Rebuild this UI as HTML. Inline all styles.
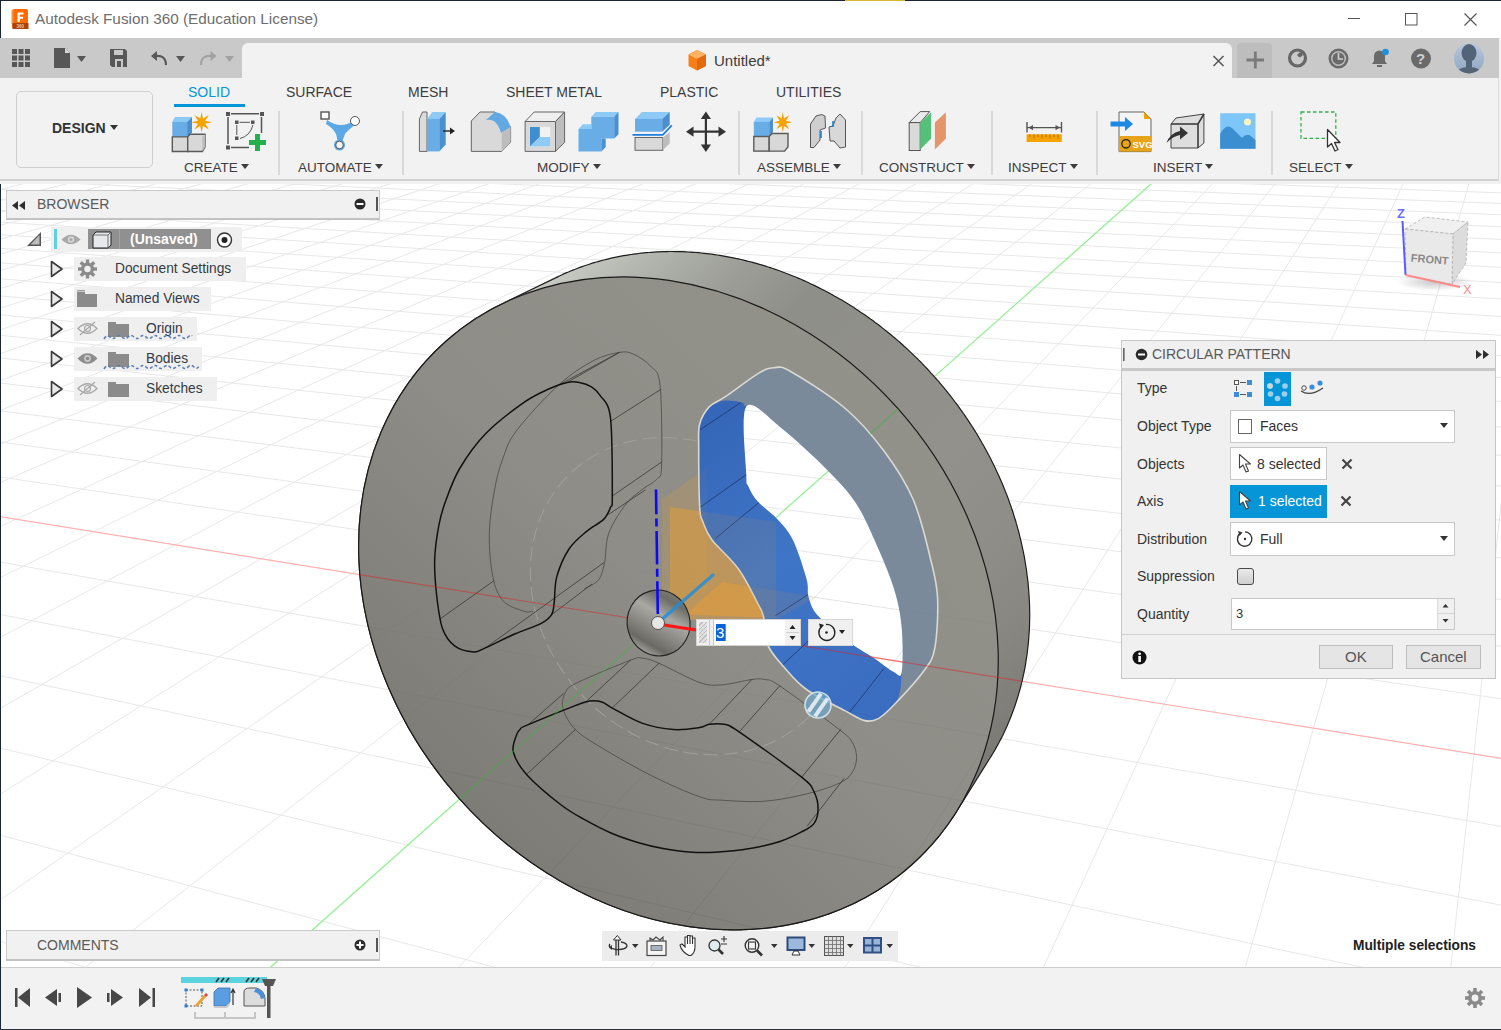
<!DOCTYPE html>
<html><head><meta charset="utf-8">
<style>
*{margin:0;padding:0;box-sizing:border-box}
html,body{width:1501px;height:1030px;overflow:hidden;background:#fff;font-family:"Liberation Sans",sans-serif;color:#3c3c3c}
.a{position:absolute}
.t{position:absolute;white-space:nowrap;line-height:1}
#title{left:0;top:0;width:1501px;height:38px;background:#fff}
#tabs{left:0;top:38px;width:1501px;height:40px;background:#c9c9c9}
#ribbon{left:0;top:78px;width:1501px;height:106px;background:#f2f2f2}
.lbl{font-size:13.5px;color:#3c3c3c}
.rt{font-size:14px;color:#3c3c3c}
.sep{position:absolute;top:111px;width:2px;height:64px;background:#d9d9d9}
.caret{display:inline-block;width:0;height:0;border-left:4px solid transparent;border-right:4px solid transparent;border-top:5px solid #3c3c3c;vertical-align:middle;margin-left:3px;position:relative;top:-2px}
</style></head>
<body>
<svg class="a" style="left:0;top:0" width="1501" height="1030" viewBox="0 0 1501 1030">
<g stroke="#e8e8e8" stroke-width="1" fill="none">
<path d="M4470.1,-21.1 L4407.6,-24.9"/>
<path d="M4472.2,-14.5 L4317.8,-24.1"/>
<path d="M4474.4,-7.7 L4230.1,-23.5"/>
<path d="M4476.8,-0.5 L4144.6,-22.8"/>
<path d="M4479.2,7.0 L4061.0,-22.1"/>
<path d="M4481.7,14.8 L3979.3,-21.5"/>
<path d="M4484.4,23.0 L3899.6,-20.8"/>
<path d="M4487.2,31.6 L3821.6,-20.2"/>
<path d="M4490.1,40.6 L3745.4,-19.6"/>
<path d="M4493.2,50.1 L3670.8,-19.0"/>
<path d="M4496.4,60.0 L3597.9,-18.5"/>
<path d="M4499.9,70.5 L3526.6,-17.9"/>
<path d="M4461.2,77.6 L3456.7,-17.4"/>
<path d="M4463.8,89.0 L3388.4,-16.8"/>
<path d="M4466.5,101.0 L3321.5,-16.3"/>
<path d="M4469.4,113.8 L3256.0,-15.8"/>
<path d="M4472.4,127.3 L3191.8,-15.3"/>
<path d="M4475.6,141.6 L3128.9,-14.8"/>
<path d="M4479.1,156.9 L3067.3,-14.3"/>
<path d="M4482.8,173.2 L3007.0,-13.8"/>
<path d="M4486.7,190.6 L2947.8,-13.3"/>
<path d="M4490.9,209.3 L2889.7,-12.9"/>
<path d="M4495.4,229.3 L2832.8,-12.4"/>
<path d="M4441.5,241.9 L2777.0,-12.0"/>
<path d="M4444.4,264.3 L2722.2,-11.6"/>
<path d="M4447.5,288.5 L2668.5,-11.1"/>
<path d="M4450.8,314.8 L2615.8,-10.7"/>
<path d="M4454.5,343.4 L2564.0,-10.3"/>
<path d="M4458.4,374.7 L2513.2,-9.9"/>
<path d="M4462.8,409.0 L2463.3,-9.5"/>
<path d="M4467.6,446.7 L2414.3,-9.1"/>
<path d="M4472.9,488.5 L2366.1,-8.7"/>
<path d="M4478.8,535.0 L2318.9,-8.4"/>
<path d="M4485.5,587.1 L2272.4,-8.0"/>
<path d="M4492.9,645.8 L2226.7,-7.6"/>
<path d="M4398.4,680.5 L2181.9,-7.3"/>
<path d="M4400.5,751.9 L2137.8,-6.9"/>
<path d="M4403.0,834.0 L2094.4,-6.6"/>
<path d="M4405.8,929.5 L2051.8,-6.3"/>
<path d="M4409.1,1042.1 L2009.8,-5.9"/>
<path d="M4413.1,1176.6 L1968.6,-5.6"/>
<path d="M4418.0,1340.3 L1928.0,-5.3"/>
<path d="M4424.1,1543.8 L1888.1,-5.0"/>
<path d="M4431.8,1803.6 L1848.9,-4.7"/>
<path d="M-1881.6,3734.8 L-2889.3,400.0"/>
<path d="M4442.0,2146.8 L1810.2,-4.4"/>
<path d="M-604.3,3809.4 L-2777.0,385.0"/>
<path d="M4456.1,2621.3 L1772.2,-4.1"/>
<path d="M770.8,3889.8 L-2670.3,370.8"/>
<path d="M4476.9,3320.1 L1734.8,-3.8"/>
<path d="M2255.2,3976.5 L-2568.6,357.3"/>
<path d="M4092.6,3789.6 L1697.9,-3.5"/>
<path d="M3317.7,3749.9 L-2471.7,344.3"/>
<path d="M3317.7,3749.9 L1661.6,-3.2"/>
<path d="M4295.9,3541.2 L-2379.3,332.0"/>
<path d="M2571.8,3711.7 L1625.9,-2.9"/>
<path d="M4150.4,2924.3 L-2290.9,320.3"/>
<path d="M1853.2,3674.9 L1590.7,-2.6"/>
<path d="M4456.1,2621.3 L-2206.4,309.0"/>
<path d="M1160.6,3639.5 L1556.1,-2.4"/>
<path d="M4320.0,2248.9 L-2125.6,298.2"/>
<path d="M492.6,3605.3 L1521.9,-2.1"/>
<path d="M4214.8,1961.1 L-2048.1,287.9"/>
<path d="M-152.2,3572.2 L1488.3,-1.8"/>
<path d="M4431.8,1803.6 L-1973.8,278.0"/>
<path d="M-775.0,3540.4 L1455.2,-1.6"/>
<path d="M4332.1,1602.9 L-1902.5,268.5"/>
<path d="M-1376.8,3509.5 L1422.6,-1.3"/>
<path d="M4249.8,1437.4 L-1833.9,259.4"/>
<path d="M-2446.5,3986.8 L1390.4,-1.0"/>
<path d="M4418.0,1340.3 L-1768.1,250.6"/>
<path d="M-2578.7,3043.0 L1327.4,-0.5"/>
<path d="M4483.7,1139.6 L-1643.7,234.0"/>
<path d="M-2623.6,2722.0 L1296.6,-0.3"/>
<path d="M4409.1,1042.1 L-1584.9,226.2"/>
<path d="M-2659.9,2462.9 L1266.3,-0.1"/>
<path d="M4344.1,957.0 L-1528.2,218.7"/>
<path d="M-2689.8,2249.4 L1236.3,0.2"/>
<path d="M4465.2,903.0 L-1473.5,211.4"/>
<path d="M-2714.8,2070.4 L1206.8,0.4"/>
<path d="M4403.0,834.0 L-1420.8,204.3"/>
<path d="M-2736.2,1918.1 L1177.7,0.6"/>
<path d="M4347.5,772.5 L-1369.8,197.5"/>
<path d="M-2754.5,1787.0 L1149.0,0.9"/>
<path d="M4451.8,731.9 L-1320.5,191.0"/>
<path d="M-2770.5,1673.0 L1120.6,1.1"/>
<path d="M4398.4,680.5 L-1272.8,184.6"/>
<path d="M-2784.5,1572.9 L1092.7,1.3"/>
<path d="M4492.9,645.8 L-1226.7,178.5"/>
<path d="M-2796.9,1484.3 L1065.1,1.5"/>
<path d="M4441.6,602.3 L-1182.0,172.5"/>
<path d="M-2807.9,1405.4 L1038.0,1.7"/>
<path d="M4394.9,562.7 L-1138.8,166.8"/>
<path d="M-2817.9,1334.6 L1011.1,1.9"/>
<path d="M4478.8,535.0 L-1096.8,161.2"/>
<path d="M-2826.8,1270.7 L984.6,2.2"/>
<path d="M4433.7,500.8 L-1056.2,155.8"/>
<path d="M-2834.9,1212.9 L958.5,2.4"/>
<path d="M4392.1,469.4 L-1016.8,150.5"/>
<path d="M-2842.3,1160.2 L932.7,2.6"/>
<path d="M4467.6,446.7 L-978.5,145.4"/>
<path d="M-2849.0,1112.0 L907.3,2.8"/>
<path d="M4427.3,419.2 L-941.4,140.5"/>
<path d="M-2855.2,1067.7 L882.1,3.0"/>
<path d="M4497.5,398.9 L-905.3,135.7"/>
<path d="M-2860.9,1027.0 L857.3,3.2"/>
<path d="M4458.4,374.7 L-870.2,131.0"/>
<path d="M-2866.2,989.3 L832.8,3.4"/>
<path d="M4422.0,352.1 L-836.1,126.5"/>
<path d="M-2871.1,954.4 L808.6,3.5"/>
<path d="M4486.3,335.0 L-803.0,122.0"/>
<path d="M-2875.6,922.0 L784.8,3.7"/>
<path d="M4450.8,314.8 L-770.7,117.7"/>
<path d="M-2879.9,891.7 L761.2,3.9"/>
<path d="M4417.6,296.0 L-739.3,113.6"/>
<path d="M-2883.8,863.5 L737.9,4.1"/>
<path d="M4476.8,281.3 L-708.7,109.5"/>
<path d="M-2887.5,837.0 L714.9,4.3"/>
<path d="M4444.4,264.3 L-679.0,105.5"/>
<path d="M-2891.0,812.2 L692.2,4.5"/>
<path d="M4413.9,248.3 L-650.0,101.7"/>
<path d="M-2894.3,788.9 L669.7,4.6"/>
<path d="M4468.7,235.5 L-621.7,97.9"/>
<path d="M-2897.3,766.9 L647.5,4.8"/>
<path d="M4438.9,221.1 L-594.1,94.2"/>
<path d="M-2900.2,746.2 L625.6,5.0"/>
<path d="M4490.9,209.3 L-567.3,90.6"/>
<path d="M-2903.0,726.6 L604.0,5.2"/>
<path d="M4461.8,196.1 L-541.1,87.2"/>
<path d="M-2905.6,708.0 L582.6,5.3"/>
<path d="M4434.1,183.6 L-515.5,83.7"/>
<path d="M-2908.0,690.5 L561.5,5.5"/>
<path d="M4482.8,173.2 L-490.5,80.4"/>
<path d="M-2910.4,673.8 L540.6,5.7"/>
<path d="M4455.7,161.8 L-466.1,77.2"/>
<path d="M-2912.6,657.9 L519.9,5.8"/>
<path d="M4430.0,151.0 L-442.3,74.0"/>
<path d="M-2914.7,642.8 L499.5,6.0"/>
<path d="M4475.6,141.6 L-419.0,70.9"/>
<path d="M-2916.7,628.5 L479.3,6.1"/>
<path d="M4450.4,131.7 L-396.3,67.9"/>
<path d="M-2918.6,614.8 L459.4,6.3"/>
<path d="M4494.1,123.0 L-374.1,64.9"/>
<path d="M-2920.5,601.7 L439.7,6.5"/>
<path d="M4469.4,113.8 L-352.3,62.0"/>
<path d="M-2922.2,589.1 L420.2,6.6"/>
<path d="M4445.7,105.0 L-331.1,59.2"/>
<path d="M-2923.9,577.2 L400.9,6.8"/>
<path d="M4487.0,97.1 L-310.3,56.4"/>
<path d="M-2925.5,565.7 L381.9,6.9"/>
<path d="M4463.8,89.0 L-290.0,53.7"/>
<path d="M-2927.0,554.7 L363.0,7.1"/>
<path d="M4441.5,81.2 L-270.0,51.1"/>
<path d="M-2928.5,544.1 L344.4,7.2"/>
<path d="M4480.6,74.0 L-250.6,48.5"/>
<path d="M-2929.9,534.0 L326.0,7.4"/>
<path d="M4458.8,66.8 L-231.5,45.9"/>
<path d="M-2931.3,524.3 L307.7,7.5"/>
<path d="M4496.4,60.0 L-212.8,43.4"/>
<path d="M-2932.6,514.9 L289.7,7.6"/>
<path d="M4474.9,53.3 L-194.5,41.0"/>
<path d="M-2933.9,505.9 L271.9,7.8"/>
<path d="M4454.2,46.8 L-176.6,38.6"/>
<path d="M-2935.1,497.2 L254.3,7.9"/>
<path d="M4490.1,40.6 L-159.0,36.3"/>
<path d="M-2936.3,488.8 L236.8,8.1"/>
<path d="M4469.8,34.5 L-141.8,34.0"/>
<path d="M-2937.4,480.7 L219.5,8.2"/>
<path d="M4450.2,28.7 L-124.9,31.7"/>
<path d="M-2938.5,473.0 L202.5,8.3"/>
<path d="M4484.4,23.0 L-108.3,29.5"/>
<path d="M-2939.5,465.4 L185.6,8.5"/>
<path d="M4465.1,17.5 L-92.1,27.3"/>
<path d="M-2940.6,458.2 L168.8,8.6"/>
<path d="M4498.2,12.1 L-76.1,25.2"/>
<path d="M-2941.5,451.1 L152.3,8.7"/>
<path d="M4479.2,7.0 L-60.5,23.1"/>
<path d="M-2942.5,444.3 L135.9,8.9"/>
<path d="M4460.8,2.0 L-45.2,21.1"/>
<path d="M-2943.4,437.7 L119.7,9.0"/>
<path d="M4492.6,-3.0 L-30.1,19.1"/>
<path d="M-2944.3,431.4 L103.7,9.1"/>
<path d="M4474.4,-7.7 L-15.4,17.1"/>
<path d="M-2945.2,425.2 L87.8,9.2"/>
<path d="M4456.9,-12.2 L-0.9,15.2"/>
<path d="M-2946.0,419.2 L72.1,9.4"/>
<path d="M4487.4,-16.9 L13.4,13.3"/>
<path d="M-2946.8,413.4 L56.5,9.5"/>
<path d="M4470.1,-21.1 L27.4,11.4"/>
<path d="M-2947.6,407.7 L41.1,9.6"/>
<path d="M4499.6,-25.6 L41.1,9.6"/>
</g>
<path d="M4452.9,1233.7 L-1704.7,242.2" stroke="#ffb0b0" stroke-width="1.2" fill="none"/>
<path d="M-2781.5,3682.2 L1358.7,-0.8" stroke="#8ef08e" stroke-width="1.2" fill="none"/>
<defs><linearGradient id="gside" gradientUnits="userSpaceOnUse" x1="560" y1="270" x2="1000" y2="760"><stop offset="0" stop-color="#c8cac4"/><stop offset="0.08" stop-color="#b2b4ae"/><stop offset="0.18" stop-color="#9d9e98"/><stop offset="0.28" stop-color="#8f8f8a"/><stop offset="0.6" stop-color="#92918c"/><stop offset="0.75" stop-color="#8e8d88"/><stop offset="0.87" stop-color="#878681"/><stop offset="0.95" stop-color="#7f7e79"/><stop offset="1" stop-color="#7a7974"/></linearGradient><linearGradient id="gface" gradientUnits="userSpaceOnUse" x1="640" y1="280" x2="700" y2="930"><stop offset="0" stop-color="#92918a"/><stop offset="0.5" stop-color="#8e8d87"/><stop offset="1" stop-color="#7b7a74"/></linearGradient><radialGradient id="ghub" cx="0.5" cy="0.5" r="0.5"><stop offset="0" stop-color="#d8d8d4"/><stop offset="0.5" stop-color="#8a8984"/><stop offset="1" stop-color="#5e5d59"/></radialGradient></defs>
<mask id="mW" maskUnits="userSpaceOnUse" x="0" y="0" width="1501" height="1030"><rect width="1501" height="1030" fill="#fff"/><path d="M746.3,406.6 C752.1,398.8 768.0,417.6 781.3,428.0 C794.6,438.4 813.7,456.4 826.0,468.7 C838.3,481.0 846.9,489.8 855.0,501.7 C863.1,513.6 868.0,525.5 874.5,540.0 C881.0,554.5 889.4,573.9 893.9,588.5 C898.4,603.1 900.4,613.5 901.7,627.4 C903.0,641.3 903.0,664.6 901.7,672.0 C900.4,679.4 898.4,674.3 893.9,672.0 C889.4,669.7 881.3,662.9 874.5,658.4 C867.7,653.9 859.2,649.1 853.1,644.9 C847.0,640.7 843.8,638.4 837.6,633.2 C831.5,628.0 821.1,619.9 816.2,613.8 C811.3,607.6 810.0,602.1 808.4,596.3 C806.8,590.5 809.1,588.2 806.5,578.8 C803.9,569.4 797.8,549.9 792.9,540.0 C788.0,530.1 783.2,525.6 777.4,519.2 C771.6,512.8 762.9,507.2 758.0,501.7 C753.1,496.2 750.2,490.7 748.3,486.2 C746.3,481.7 746.6,487.9 746.3,474.6 C746.0,461.3 740.5,414.4 746.3,406.6Z" fill="#000"/></mask>
<linearGradient id="gfade" gradientUnits="userSpaceOnUse" x1="0" y1="520" x2="0" y2="900"><stop offset="0" stop-color="#fff" stop-opacity="0"/><stop offset="1" stop-color="#fff" stop-opacity="1"/></linearGradient><mask id="mfade" maskUnits="userSpaceOnUse" x="0" y="0" width="1501" height="1030"><rect width="1501" height="1030" fill="url(#gfade)"/></mask>
<clipPath id="cface"><ellipse cx="678.45" cy="603.34" rx="350.38" ry="293.44" transform="rotate(48.37 678.45 603.34)"/></clipPath>
<g mask="url(#mW)">
<path d="M990.2,757.7 L957.4,810.3 L956.0,812.5 L954.6,814.7 L953.2,816.8 L951.7,819.0 L950.3,821.1 L948.8,823.2 L947.3,825.3 L945.8,827.4 L944.2,829.5 L942.7,831.5 L941.1,833.5 L939.5,835.6 L937.9,837.5 L936.2,839.5 L934.5,841.5 L932.9,843.4 L931.2,845.3 L929.4,847.2 L927.7,849.1 L925.9,851.0 L924.2,852.8 L922.4,854.7 L920.6,856.5 L918.7,858.3 L916.9,860.0 L915.0,861.8 L913.1,863.5 L911.2,865.2 L909.3,866.9 L907.4,868.6 L905.4,870.2 L903.4,871.9 L901.4,873.5 L899.4,875.1 L897.4,876.6 L895.3,878.2 L893.3,879.7 L891.2,881.2 L889.1,882.7 L887.0,884.2 L884.9,885.6 L882.7,887.0 L880.6,888.4 L878.4,889.8 L876.2,891.2 L874.0,892.5 L871.8,893.8 L869.6,895.1 L867.3,896.4 L865.1,897.6 L862.8,898.8 L860.5,900.0 L858.2,901.2 L855.9,902.4 L853.6,903.5 L851.2,904.6 L848.9,905.7 L846.5,906.8 L844.1,907.8 L841.7,908.8 L839.3,909.8 L836.9,910.8 L834.5,911.7 L832.0,912.7 L829.6,913.6 L827.1,914.4 L824.6,915.3 L822.2,916.1 L819.7,916.9 L817.2,917.7 L814.6,918.5 L812.1,919.2 L809.6,919.9 L807.0,920.6 L804.4,921.2 L801.9,921.9 L799.3,922.5 L796.7,923.1 L794.1,923.6 L791.5,924.2 L788.9,924.7 L786.3,925.2 L783.6,925.7 L781.0,926.1 L778.4,926.5 L775.7,926.9 L773.0,927.3 L770.4,927.6 L767.7,927.9 L765.0,928.2 L762.3,928.5 L759.6,928.7 L756.9,929.0 L754.2,929.2 L751.5,929.3 L748.8,929.5 L746.0,929.6 L743.3,929.7 L740.6,929.8 L737.8,929.8 L735.1,929.8 L732.3,929.8 L729.6,929.8 L726.8,929.7 L724.1,929.6 L721.3,929.5 L718.5,929.4 L715.8,929.3 L713.0,929.1 L710.2,928.9 L707.4,928.7 L704.7,928.4 L701.9,928.1 L699.1,927.8 L696.3,927.5 L693.5,927.1 L690.7,926.8 L687.9,926.4 L685.2,925.9 L682.4,925.5 L679.6,925.0 L676.8,924.5 L674.0,924.0 L671.2,923.4 L668.4,922.9 L665.6,922.3 L662.8,921.7 L660.0,921.0 L657.3,920.3 L654.5,919.6 L651.7,918.9 L648.9,918.2 L646.1,917.4 L643.4,916.6 L640.6,915.8 L637.8,915.0 L635.1,914.1 L632.3,913.2 L629.5,912.3 L626.8,911.4 L624.0,910.4 L621.3,909.5 L618.5,908.5 L615.8,907.4 L613.1,906.4 L610.3,905.3 L607.6,904.2 L604.9,903.1 L602.2,902.0 L599.5,900.8 L596.8,899.6 L594.1,898.4 L591.4,897.2 L588.7,895.9 L586.0,894.7 L583.4,893.4 L580.7,892.0 L578.0,890.7 L575.4,889.3 L572.8,887.9 L570.1,886.5 L567.5,885.1 L564.9,883.7 L562.3,882.2 L559.7,880.7 L557.1,879.2 L554.5,877.6 L552.0,876.1 L549.4,874.5 L546.8,872.9 L544.3,871.3 L541.8,869.7 L539.3,868.0 L536.8,866.3 L534.3,864.6 L531.8,862.9 L529.3,861.2 L526.8,859.4 L524.4,857.6 L521.9,855.8 L519.5,854.0 L517.1,852.2 L514.7,850.3 L512.3,848.5 L509.9,846.6 L507.6,844.7 L505.2,842.7 L502.9,840.8 L500.5,838.8 L498.2,836.8 L495.9,834.8 L493.6,832.8 L491.4,830.8 L489.1,828.7 L486.9,826.7 L484.7,824.6 L482.4,822.5 L480.2,820.4 L478.1,818.2 L475.9,816.1 L473.7,813.9 L471.6,811.7 L469.5,809.5 L467.4,807.3 L465.3,805.1 L463.2,802.8 L461.2,800.6 L459.1,798.3 L457.1,796.0 L455.1,793.7 L453.1,791.4 L451.1,789.0 L449.2,786.7 L447.2,784.3 L445.3,781.9 L443.4,779.5 L441.5,777.1 L439.7,774.7 L437.8,772.3 L436.0,769.8 L434.2,767.4 L432.4,764.9 L430.6,762.4 L428.9,759.9 L427.1,757.4 L425.4,754.9 L423.7,752.4 L422.0,749.8 L420.4,747.3 L418.7,744.7 L417.1,742.2 L415.5,739.6 L413.9,737.0 L412.4,734.4 L410.8,731.8 L409.3,729.1 L407.8,726.5 L406.3,723.9 L404.9,721.2 L403.5,718.5 L402.0,715.9 L400.6,713.2 L399.3,710.5 L397.9,707.8 L396.6,705.1 L395.3,702.4 L394.0,699.7 L392.7,696.9 L391.5,694.2 L390.3,691.5 L389.1,688.7 L387.9,686.0 L386.7,683.2 L385.6,680.5 L384.5,677.7 L383.4,674.9 L382.3,672.1 L381.3,669.3 L380.3,666.5 L379.3,663.7 L378.3,660.9 L377.4,658.1 L376.4,655.3 L375.5,652.5 L374.6,649.7 L373.8,646.9 L372.9,644.0 L372.1,641.2 L371.3,638.4 L370.6,635.5 L369.8,632.7 L369.1,629.9 L368.4,627.0 L367.7,624.2 L367.1,621.3 L366.5,618.5 L365.9,615.7 L365.3,612.8 L364.7,610.0 L364.2,607.1 L363.7,604.3 L363.2,601.4 L362.7,598.6 L362.3,595.7 L361.9,592.9 L361.5,590.0 L361.2,587.2 L360.8,584.3 L360.5,581.5 L360.2,578.6 L359.9,575.8 L359.7,573.0 L359.5,570.1 L359.3,567.3 L359.1,564.5 L359.0,561.6 L358.9,558.8 L358.8,556.0 L358.7,553.2 L358.7,550.4 L358.6,547.6 L358.6,544.8 L358.7,542.0 L358.7,539.2 L358.8,536.4 L358.9,533.6 L359.0,530.8 L359.2,528.0 L359.3,525.3 L359.5,522.5 L359.8,519.7 L360.0,517.0 L360.3,514.2 L360.6,511.5 L360.9,508.8 L361.2,506.0 L361.6,503.3 L362.0,500.6 L362.4,497.9 L362.8,495.2 L363.3,492.5 L363.8,489.9 L364.3,487.2 L364.8,484.5 L365.4,481.9 L366.0,479.3 L366.6,476.6 L367.2,474.0 L367.9,471.4 L368.5,468.8 L369.2,466.2 L370.0,463.6 L370.7,461.1 L371.5,458.5 L372.3,455.9 L373.1,453.4 L373.9,450.9 L374.8,448.4 L375.7,445.9 L376.6,443.4 L377.5,440.9 L378.5,438.4 L379.5,436.0 L380.5,433.5 L381.5,431.1 L382.5,428.7 L383.6,426.3 L384.7,423.9 L385.8,421.5 L387.0,419.2 L388.1,416.8 L389.3,414.5 L390.5,412.2 L391.7,409.9 L393.0,407.6 L394.2,405.3 L395.5,403.1 L396.9,400.8 L398.2,398.6 L399.5,396.4 L400.9,394.2 L402.3,392.0 L403.7,389.8 L405.2,387.7 L406.6,385.6 L408.1,383.5 L409.6,381.4 L411.1,379.3 L412.7,377.2 L414.2,375.2 L415.8,373.1 L417.4,371.1 L419.0,369.1 L420.7,367.2 L422.4,365.2 L424.0,363.3 L425.7,361.3 L427.5,359.4 L429.2,357.6 L431.0,355.7 L432.7,353.8 L434.5,352.0 L436.3,350.2 L438.2,348.4 L440.0,346.6 L441.9,344.9 L443.8,343.2 L445.7,341.4 L447.6,339.8 L449.5,338.1 L451.5,336.4 L453.5,334.8 L455.5,333.2 L457.5,331.6 L459.5,330.0 L461.6,328.5 L463.6,327.0 L465.7,325.5 L467.8,324.0 L469.9,322.5 L472.0,321.1 L474.2,319.6 L476.3,318.2 L478.5,316.9 L480.7,315.5 L482.9,314.2 L485.1,312.9 L487.3,311.6 L489.6,310.3 L491.8,309.1 L494.1,307.8 L496.4,306.6 L498.7,305.5 L501.0,304.3 L503.3,303.2 L557.1,277.1 L559.4,276.0 L561.6,275.0 L563.8,273.9 L566.1,272.9 L568.4,272.0 L570.7,271.0 L572.9,270.1 L575.3,269.2 L577.6,268.3 L579.9,267.4 L582.2,266.6 L584.6,265.8 L587.0,265.0 L589.3,264.2 L591.7,263.4 L594.1,262.7 L596.5,262.0 L598.9,261.3 L601.3,260.7 L603.8,260.0 L606.2,259.4 L608.7,258.8 L611.1,258.2 L613.6,257.7 L616.1,257.2 L618.5,256.7 L621.0,256.2 L623.5,255.7 L626.0,255.3 L628.6,254.9 L631.1,254.5 L633.6,254.1 L636.2,253.8 L638.7,253.5 L641.2,253.2 L643.8,252.9 L646.4,252.7 L648.9,252.5 L651.5,252.3 L654.1,252.1 L656.7,251.9 L659.3,251.8 L661.9,251.7 L664.5,251.6 L667.1,251.6 L669.7,251.5 L672.3,251.5 L674.9,251.6 L677.5,251.6 L680.2,251.7 L682.8,251.7 L685.4,251.8 L688.1,252.0 L690.7,252.1 L693.3,252.3 L696.0,252.5 L698.6,252.7 L701.3,253.0 L703.9,253.3 L706.6,253.6 L709.2,253.9 L711.9,254.2 L714.5,254.6 L717.2,255.0 L719.8,255.4 L722.5,255.8 L725.2,256.3 L727.8,256.8 L730.5,257.3 L733.1,257.8 L735.8,258.4 L738.4,258.9 L741.1,259.5 L743.7,260.2 L746.4,260.8 L749.0,261.5 L751.7,262.2 L754.3,262.9 L757.0,263.6 L759.6,264.4 L762.3,265.1 L764.9,265.9 L767.5,266.8 L770.2,267.6 L772.8,268.5 L775.4,269.4 L778.0,270.3 L780.6,271.2 L783.2,272.2 L785.9,273.2 L788.5,274.2 L791.0,275.2 L793.6,276.2 L796.2,277.3 L798.8,278.4 L801.4,279.5 L804.0,280.6 L806.5,281.8 L809.1,283.0 L811.6,284.2 L814.2,285.4 L816.7,286.6 L819.2,287.9 L821.8,289.2 L824.3,290.5 L826.8,291.8 L829.3,293.1 L831.8,294.5 L834.3,295.9 L836.7,297.3 L839.2,298.7 L841.7,300.1 L844.1,301.6 L846.6,303.1 L849.0,304.6 L851.4,306.1 L853.8,307.6 L856.2,309.2 L858.6,310.8 L861.0,312.4 L863.4,314.0 L865.7,315.6 L868.1,317.3 L870.4,319.0 L872.8,320.6 L875.1,322.4 L877.4,324.1 L879.7,325.8 L882.0,327.6 L884.2,329.4 L886.5,331.2 L888.7,333.0 L891.0,334.8 L893.2,336.7 L895.4,338.5 L897.6,340.4 L899.8,342.3 L902.0,344.2 L904.1,346.2 L906.3,348.1 L908.4,350.1 L910.5,352.1 L912.6,354.1 L914.7,356.1 L916.8,358.1 L918.8,360.2 L920.9,362.2 L922.9,364.3 L924.9,366.4 L926.9,368.5 L928.9,370.6 L930.8,372.8 L932.8,374.9 L934.7,377.1 L936.7,379.3 L938.6,381.4 L940.4,383.6 L942.3,385.9 L944.2,388.1 L946.0,390.3 L947.8,392.6 L949.6,394.9 L951.4,397.2 L953.2,399.5 L954.9,401.8 L956.7,404.1 L958.4,406.4 L960.1,408.8 L961.8,411.1 L963.4,413.5 L965.1,415.9 L966.7,418.3 L968.3,420.7 L969.9,423.1 L971.5,425.5 L973.0,427.9 L974.6,430.4 L976.1,432.8 L977.6,435.3 L979.1,437.7 L980.5,440.2 L981.9,442.7 L983.4,445.2 L984.8,447.7 L986.1,450.2 L987.5,452.8 L988.8,455.3 L990.2,457.8 L991.5,460.4 L992.7,462.9 L994.0,465.5 L995.2,468.1 L996.4,470.7 L997.6,473.2 L998.8,475.8 L1000.0,478.4 L1001.1,481.0 L1002.2,483.6 L1003.3,486.3 L1004.4,488.9 L1005.4,491.5 L1006.5,494.1 L1007.5,496.8 L1008.5,499.4 L1009.4,502.1 L1010.4,504.7 L1011.3,507.4 L1012.2,510.0 L1013.1,512.7 L1013.9,515.4 L1014.7,518.0 L1015.6,520.7 L1016.3,523.4 L1017.1,526.1 L1017.9,528.8 L1018.6,531.4 L1019.3,534.1 L1019.9,536.8 L1020.6,539.5 L1021.2,542.2 L1021.8,544.9 L1022.4,547.6 L1023.0,550.3 L1023.5,553.0 L1024.1,555.7 L1024.6,558.4 L1025.0,561.1 L1025.5,563.8 L1025.9,566.5 L1026.3,569.2 L1026.7,571.9 L1027.0,574.6 L1027.4,577.3 L1027.7,580.0 L1028.0,582.6 L1028.3,585.3 L1028.5,588.0 L1028.7,590.7 L1028.9,593.4 L1029.1,596.1 L1029.2,598.8 L1029.4,601.4 L1029.5,604.1 L1029.6,606.8 L1029.6,609.4 L1029.7,612.1 L1029.7,614.8 L1029.7,617.4 L1029.6,620.1 L1029.6,622.7 L1029.5,625.4 L1029.4,628.0 L1029.3,630.6 L1029.1,633.3 L1028.9,635.9 L1028.7,638.5 L1028.5,641.1 L1028.3,643.7 L1028.0,646.3 L1027.7,648.9 L1027.4,651.5 L1027.1,654.1 L1026.7,656.6 L1026.3,659.2 L1025.9,661.7 L1025.5,664.3 L1025.1,666.8 L1024.6,669.4 L1024.1,671.9 L1023.6,674.4 L1023.0,676.9 L1022.5,679.4 L1021.9,681.9 L1021.3,684.4 L1020.6,686.8 L1020.0,689.3 L1019.3,691.7 L1018.6,694.2 L1017.9,696.6 L1017.1,699.0 L1016.4,701.4 L1015.6,703.8 L1014.8,706.2 L1014.0,708.6 L1013.1,711.0 L1012.2,713.3 L1011.3,715.7 L1010.4,718.0 L1009.5,720.3 L1008.5,722.6 L1007.5,724.9 L1006.5,727.2 L1005.5,729.5 L1004.4,731.7 L1003.4,734.0 L1002.3,736.2 L1001.2,738.4 L1000.0,740.6 L998.9,742.8 L997.7,745.0 L996.5,747.1 L995.3,749.3 L994.1,751.4 L992.8,753.5 L991.5,755.6Z" fill="url(#gside)" stroke="#1e1e1e" stroke-width="1.2"/>
<ellipse cx="678.45" cy="603.34" rx="350.38" ry="293.44" transform="rotate(48.37 678.45 603.34)" fill="url(#gface)" stroke="#1a1a1a" stroke-width="1.2"/>
<defs><linearGradient id="ghub2" gradientUnits="userSpaceOnUse" x1="690" y1="592" x2="627" y2="655"><stop offset="0" stop-color="#8a8984"/><stop offset="0.22" stop-color="#6e6d68"/><stop offset="0.4" stop-color="#a9a8a3"/><stop offset="0.55" stop-color="#8f8e89"/><stop offset="0.75" stop-color="#6a6964"/><stop offset="0.9" stop-color="#b5b4af"/><stop offset="1" stop-color="#8a8984"/></linearGradient></defs>
<ellipse cx="688.5" cy="596.2" rx="170.4" ry="145.4" transform="rotate(45.45 688.5 596.2)" fill="none" stroke="#a09f9a" stroke-width="1" stroke-dasharray="14 6"/>
<g fill="none" stroke-linejoin="round" stroke-linecap="round">
<path d="M532.6,611.3 C531.2,611.3 528.9,613.0 524.0,611.3 C519.1,609.6 508.3,606.7 503.1,600.9 C497.9,595.1 495.1,587.9 492.8,576.6 C490.5,565.3 489.0,547.7 489.3,533.3 C489.6,518.9 492.2,502.6 494.5,490.0 C496.8,477.4 499.2,468.0 503.0,458.0 C506.8,448.0 507.7,442.2 517.0,430.0 C526.3,417.8 545.9,396.5 558.6,385.0 C571.3,373.5 583.1,366.2 593.2,360.8 C603.3,355.4 612.6,353.6 619.2,352.5 C625.8,351.4 627.8,351.6 633.0,353.9 C638.2,356.1 645.9,360.8 650.4,366.0 C654.9,371.2 658.1,368.6 660.0,385.0 C661.9,401.4 662.1,449.1 661.6,464.7 C661.1,480.3 660.0,474.9 657.3,478.6 C654.6,482.4 647.2,485.8 645.2,487.2" stroke="#4a4a46" stroke-width="0.8"/>
<path d="M645.2,487.2 C642.0,490.0 632.2,496.2 626.1,503.9 C620.0,511.6 612.4,523.5 608.8,533.3 C605.2,543.1 606.2,555.0 604.5,562.8 C602.8,570.6 601.7,575.7 598.4,580.0 C595.1,584.3 586.9,587.2 584.6,588.7" stroke="#4a4a46" stroke-width="0.8"/>
<path d="M699.8,682.6 C689.3,679.0 668.5,667.4 659.0,663.3 C649.5,659.2 647.5,658.7 642.7,658.2 C638.0,657.7 641.4,656.1 630.5,660.2 C619.6,664.3 588.4,677.2 577.5,682.6 C566.6,688.0 567.6,688.4 565.2,692.8 C562.8,697.2 561.5,703.0 563.2,709.1 C564.9,715.2 569.0,723.0 575.4,729.5 C581.8,736.0 589.0,740.1 601.9,747.9 C614.8,755.7 636.6,768.2 652.9,776.4 C669.2,784.5 688.3,792.8 699.8,796.8 C711.3,800.8 711.2,799.5 722.0,800.2 C732.8,800.9 750.5,802.3 764.7,801.2 C778.9,800.1 794.9,796.7 807.4,793.7 C819.9,790.7 832.0,786.7 839.5,783.1 C847.0,779.5 849.4,776.7 852.3,772.4 C855.1,768.1 856.6,762.4 856.6,757.4 C856.6,752.4 855.1,747.1 852.3,742.5 C849.4,737.9 851.6,739.1 839.5,729.7 C827.4,720.3 792.2,694.3 779.7,685.9 C767.2,677.5 769.3,680.6 764.7,679.5 C760.1,678.4 759.0,678.6 751.9,679.5 C744.8,680.4 730.7,684.3 722.0,684.8 C713.3,685.3 710.3,686.2 699.8,682.6Z" stroke="#4a4a46" stroke-width="0.8"/>
<path d="M567.2,382.4 L619.2,352.5" stroke="#3a3a37" stroke-width="0.8"/>
<path d="M558.6,385.0 L619.2,352.5" stroke="#3a3a37" stroke-width="0.8"/>
<path d="M610.5,421.4 L660.8,389.4" stroke="#3a3a37" stroke-width="0.8"/>
<path d="M612.3,496.0 L661.6,462.0" stroke="#3a3a37" stroke-width="0.8"/>
<path d="M439.9,619.0 L493.6,581.0" stroke="#3a3a37" stroke-width="0.8"/>
<path d="M485.8,647.6 L603.6,562.8" stroke="#3a3a37" stroke-width="0.8"/>
<path d="M551.6,614.7 L591.5,584.4" stroke="#3a3a37" stroke-width="0.8"/>
<path d="M608.8,514.3 L645.2,490.0" stroke="#3a3a37" stroke-width="0.8"/>
<path d="M528.5,724.4 L563.2,693.8" stroke="#3a3a37" stroke-width="0.8"/>
<path d="M526.5,774.4 L575.4,729.5" stroke="#3a3a37" stroke-width="0.8"/>
<path d="M585.6,702.0 L630.5,660.2" stroke="#3a3a37" stroke-width="0.8"/>
<path d="M613.1,707.1 L659.0,663.3" stroke="#3a3a37" stroke-width="0.8"/>
<path d="M709.2,724.3 L751.9,679.5" stroke="#3a3a37" stroke-width="0.8"/>
<path d="M740.2,730.8 L779.7,685.9" stroke="#3a3a37" stroke-width="0.8"/>
<path d="M802.1,776.7 L840.5,729.7" stroke="#3a3a37" stroke-width="0.8"/>
<path d="M807.4,825.8 L843.7,778.8" stroke="#3a3a37" stroke-width="0.8"/>
<path d="M567.2,382.4 C572.1,381.4 575.4,381.7 579.4,382.4 C583.4,383.1 588.0,384.6 591.5,386.8 C595.0,389.0 596.9,390.2 600.1,395.4 C603.3,400.6 608.5,401.2 610.5,418.0 C612.5,434.8 612.3,481.1 612.3,496.0 C612.3,510.9 612.0,503.4 610.5,507.3 C609.0,511.2 607.6,515.4 603.6,519.4 C599.6,523.4 592.1,526.7 586.3,531.6 C580.5,536.5 573.9,541.5 569.0,549.0 C564.1,556.5 559.3,567.7 556.8,576.6 C554.3,585.5 555.1,596.2 554.2,602.6 C553.3,609.0 553.8,611.2 551.6,614.7 C549.5,618.2 547.3,620.2 541.3,623.4 C535.2,626.6 524.5,629.8 515.3,633.8 C506.0,637.8 492.7,644.6 485.8,647.6 C478.9,650.6 478.9,652.3 473.7,652.0 C468.5,651.7 459.8,649.8 454.6,645.9 C449.4,642.0 445.5,637.2 442.5,628.6 C439.5,620.0 437.8,605.5 436.5,594.0 C435.2,582.5 434.3,570.9 434.7,559.3 C435.1,547.7 437.1,534.5 439.0,524.6 C440.9,514.7 442.5,509.4 446.0,500.0 C449.5,490.6 453.4,479.1 460.0,468.0 C466.6,456.9 475.1,444.4 485.8,433.5 C496.5,422.6 513.3,409.9 524.0,402.4 C534.7,394.9 542.7,391.8 549.9,388.5 C557.1,385.2 562.3,383.4 567.2,382.4Z" stroke="#111" stroke-width="1.5"/>
<path d="M526.5,725.4 C535.1,721.7 560.9,711.2 571.4,707.1 C581.9,703.0 584.6,701.9 589.7,701.0 C594.8,700.1 597.8,700.6 601.9,702.0 C606.0,703.4 607.4,705.5 614.2,709.1 C621.0,712.7 632.9,720.0 642.7,723.4 C652.6,726.8 663.8,728.8 673.3,729.5 C682.8,730.2 693.8,728.4 699.8,727.5 C705.8,726.6 705.1,724.8 709.2,724.3 C713.3,723.8 719.2,723.0 724.2,724.3 C729.2,725.5 726.3,723.1 739.1,731.8 C751.9,740.5 788.5,766.7 801.0,776.7 C813.5,786.7 811.0,786.3 813.9,791.6 C816.8,796.9 818.1,803.4 818.1,808.7 C818.1,814.0 816.8,819.7 813.9,823.6 C811.0,827.5 806.7,829.2 801.0,832.2 C795.3,835.2 788.4,838.8 779.9,841.5 C771.4,844.2 760.8,846.7 750.0,848.5 C739.2,850.3 725.2,851.6 715.0,852.2 C704.8,852.8 697.6,852.6 689.0,852.0 C680.4,851.4 671.5,850.0 663.1,848.5 C654.7,847.0 647.1,845.2 638.6,842.7 C630.1,840.2 620.9,837.2 612.1,833.5 C603.3,829.8 594.1,825.0 585.6,820.2 C577.1,815.5 571.1,812.6 561.2,805.0 C551.4,797.4 534.5,783.2 526.5,774.4 C518.5,765.6 515.0,758.5 513.3,752.0 C511.6,745.5 515.2,739.4 516.3,735.6 C517.4,731.9 518.3,731.2 520.0,729.5 C521.7,727.8 517.9,729.1 526.5,725.4Z" stroke="#111" stroke-width="1.5"/>
</g>
<path d="M662,499 L707,468 L707,590 L662,604Z" fill="#e0a040" fill-opacity="0.18"/>
<path d="M670,507 L776,522 L776,618 L670,614Z" fill="#f0a030" fill-opacity="0.42"/>
<path d="M679,620 L722,582 L817,597 L776,620Z" fill="#f0a030" fill-opacity="0.35"/>
<defs><linearGradient id="gblue" gradientUnits="userSpaceOnUse" x1="700" y1="420" x2="900" y2="720"><stop offset="0" stop-color="#3566b8"/><stop offset="0.45" stop-color="#3f75c6"/><stop offset="1" stop-color="#3a6cc0"/></linearGradient></defs>
<path d="M699.7,424.0 C701.5,417.2 705.2,411.1 709.4,406.6 C713.6,402.1 716.9,402.4 725.0,396.9 C733.1,391.4 749.9,378.5 758.0,373.6 C766.1,368.8 768.0,368.1 773.5,367.8 C779.0,367.5 779.0,364.9 791.0,371.7 C803.0,378.5 829.8,395.2 845.3,408.5 C860.8,421.8 872.9,436.1 884.2,451.3 C895.5,466.5 905.5,481.7 913.3,499.8 C921.1,517.9 926.8,543.6 930.8,560.0 C934.8,576.4 937.0,583.5 937.6,598.3 C938.2,613.1 937.1,636.4 934.7,648.7 C932.3,661.0 929.8,662.6 923.0,672.0 C916.2,681.4 901.4,697.2 893.9,705.0 C886.4,712.8 883.1,716.0 878.3,718.6 C873.4,721.2 870.3,721.9 864.8,720.6 C859.3,719.3 855.0,716.1 845.3,710.9 C835.6,705.7 816.9,697.0 806.5,689.5 C796.1,682.0 789.7,673.6 783.2,666.2 C776.7,658.8 770.9,653.0 767.7,644.9 C764.5,636.8 765.4,624.5 763.8,617.7 C762.2,610.9 762.2,612.1 758.0,604.0 C753.8,595.9 746.2,579.7 738.5,569.0 C730.8,558.3 717.9,547.8 712.0,540.0 C706.1,532.2 705.0,527.4 703.0,522.0 C701.0,516.6 700.4,520.0 699.7,507.6 C699.0,495.2 698.7,461.3 698.7,447.4 C698.7,433.5 697.9,430.8 699.7,424.0Z" fill="url(#gblue)"/>
<path d="M709.4,406.6 C709.7,406.0 716.9,402.4 725.0,396.9 C733.1,391.4 749.9,378.5 758.0,373.6 C766.1,368.8 768.0,368.1 773.5,367.8 C779.0,367.5 779.0,364.9 791.0,371.7 C803.0,378.5 829.8,395.2 845.3,408.5 C860.8,421.8 872.9,436.1 884.2,451.3 C895.5,466.5 905.5,481.7 913.3,499.8 C921.1,517.9 926.8,543.6 930.8,560.0 C934.8,576.4 937.0,583.5 937.6,598.3 C938.2,613.1 937.1,636.4 934.7,648.7 C932.3,661.0 929.8,662.6 923.0,672.0 C916.2,681.4 901.4,697.2 893.9,705.0 C886.4,712.8 879.9,717.0 878.3,718.6 C876.7,720.2 881.0,718.1 884.2,714.8 C887.5,711.5 894.9,706.1 897.8,699.0 C900.7,691.9 901.1,683.9 901.7,672.0 C902.4,660.1 903.0,641.3 901.7,627.4 C900.4,613.5 898.4,603.1 893.9,588.5 C889.4,573.9 881.0,554.5 874.5,540.0 C868.0,525.5 863.1,513.6 855.0,501.7 C846.9,489.8 838.3,481.0 826.0,468.7 C813.7,456.4 794.6,438.4 781.3,428.0 C768.0,417.6 752.4,410.7 746.3,406.6 C740.1,402.6 745.7,404.5 744.4,403.7 C743.1,402.9 742.1,402.2 738.5,401.7 C734.9,401.2 727.9,400.0 723.0,400.8 C718.1,401.6 709.1,407.2 709.4,406.6Z" fill="#7b8a9b"/>
<path d="M699.7,430.0 L740.5,402.7" stroke="#1f3c70" stroke-width="0.9"/>
<path d="M699.7,507.6 L746.3,474.6" stroke="#1f3c70" stroke-width="0.9"/>
<path d="M715.2,538.6 L760.0,501.7" stroke="#1f3c70" stroke-width="0.9"/>
<path d="M775.4,615.7 L808.4,594.4" stroke="#1f3c70" stroke-width="0.9"/>
<path d="M783.2,664.3 L808.4,641.0" stroke="#1f3c70" stroke-width="0.9"/>
<path d="M849.2,712.8 L884.2,668.2" stroke="#1f3c70" stroke-width="0.9"/>
<path d="M699.7,424.0 C701.5,417.2 705.2,411.1 709.4,406.6 C713.6,402.1 716.9,402.4 725.0,396.9 C733.1,391.4 749.9,378.5 758.0,373.6 C766.1,368.8 768.0,368.1 773.5,367.8 C779.0,367.5 779.0,364.9 791.0,371.7 C803.0,378.5 829.8,395.2 845.3,408.5 C860.8,421.8 872.9,436.1 884.2,451.3 C895.5,466.5 905.5,481.7 913.3,499.8 C921.1,517.9 926.8,543.6 930.8,560.0 C934.8,576.4 937.0,583.5 937.6,598.3 C938.2,613.1 937.1,636.4 934.7,648.7 C932.3,661.0 929.8,662.6 923.0,672.0 C916.2,681.4 901.4,697.2 893.9,705.0 C886.4,712.8 883.1,716.0 878.3,718.6 C873.4,721.2 870.3,721.9 864.8,720.6 C859.3,719.3 855.0,716.1 845.3,710.9 C835.6,705.7 816.9,697.0 806.5,689.5 C796.1,682.0 789.7,673.6 783.2,666.2 C776.7,658.8 770.9,653.0 767.7,644.9 C764.5,636.8 765.4,624.5 763.8,617.7 C762.2,610.9 762.2,612.1 758.0,604.0 C753.8,595.9 746.2,579.7 738.5,569.0 C730.8,558.3 717.9,547.8 712.0,540.0 C706.1,532.2 705.0,527.4 703.0,522.0 C701.0,516.6 700.4,520.0 699.7,507.6 C699.0,495.2 698.7,461.3 698.7,447.4 C698.7,433.5 697.9,430.8 699.7,424.0Z" fill="none" stroke="#d9d9d2" stroke-width="1.6"/>
</g>
<g opacity="0.06" clip-path="url(#cface)" mask="url(#mfade)"><g stroke="#000" stroke-width="1" fill="none">
<path d="M4470.1,-21.1 L4407.6,-24.9"/>
<path d="M4472.2,-14.5 L4317.8,-24.1"/>
<path d="M4474.4,-7.7 L4230.1,-23.5"/>
<path d="M4476.8,-0.5 L4144.6,-22.8"/>
<path d="M4479.2,7.0 L4061.0,-22.1"/>
<path d="M4481.7,14.8 L3979.3,-21.5"/>
<path d="M4484.4,23.0 L3899.6,-20.8"/>
<path d="M4487.2,31.6 L3821.6,-20.2"/>
<path d="M4490.1,40.6 L3745.4,-19.6"/>
<path d="M4493.2,50.1 L3670.8,-19.0"/>
<path d="M4496.4,60.0 L3597.9,-18.5"/>
<path d="M4499.9,70.5 L3526.6,-17.9"/>
<path d="M4461.2,77.6 L3456.7,-17.4"/>
<path d="M4463.8,89.0 L3388.4,-16.8"/>
<path d="M4466.5,101.0 L3321.5,-16.3"/>
<path d="M4469.4,113.8 L3256.0,-15.8"/>
<path d="M4472.4,127.3 L3191.8,-15.3"/>
<path d="M4475.6,141.6 L3128.9,-14.8"/>
<path d="M4479.1,156.9 L3067.3,-14.3"/>
<path d="M4482.8,173.2 L3007.0,-13.8"/>
<path d="M4486.7,190.6 L2947.8,-13.3"/>
<path d="M4490.9,209.3 L2889.7,-12.9"/>
<path d="M4495.4,229.3 L2832.8,-12.4"/>
<path d="M4441.5,241.9 L2777.0,-12.0"/>
<path d="M4444.4,264.3 L2722.2,-11.6"/>
<path d="M4447.5,288.5 L2668.5,-11.1"/>
<path d="M4450.8,314.8 L2615.8,-10.7"/>
<path d="M4454.5,343.4 L2564.0,-10.3"/>
<path d="M4458.4,374.7 L2513.2,-9.9"/>
<path d="M4462.8,409.0 L2463.3,-9.5"/>
<path d="M4467.6,446.7 L2414.3,-9.1"/>
<path d="M4472.9,488.5 L2366.1,-8.7"/>
<path d="M4478.8,535.0 L2318.9,-8.4"/>
<path d="M4485.5,587.1 L2272.4,-8.0"/>
<path d="M4492.9,645.8 L2226.7,-7.6"/>
<path d="M4398.4,680.5 L2181.9,-7.3"/>
<path d="M4400.5,751.9 L2137.8,-6.9"/>
<path d="M4403.0,834.0 L2094.4,-6.6"/>
<path d="M4405.8,929.5 L2051.8,-6.3"/>
<path d="M4409.1,1042.1 L2009.8,-5.9"/>
<path d="M4413.1,1176.6 L1968.6,-5.6"/>
<path d="M4418.0,1340.3 L1928.0,-5.3"/>
<path d="M4424.1,1543.8 L1888.1,-5.0"/>
<path d="M4431.8,1803.6 L1848.9,-4.7"/>
<path d="M-1881.6,3734.8 L-2889.3,400.0"/>
<path d="M4442.0,2146.8 L1810.2,-4.4"/>
<path d="M-604.3,3809.4 L-2777.0,385.0"/>
<path d="M4456.1,2621.3 L1772.2,-4.1"/>
<path d="M770.8,3889.8 L-2670.3,370.8"/>
<path d="M4476.9,3320.1 L1734.8,-3.8"/>
<path d="M2255.2,3976.5 L-2568.6,357.3"/>
<path d="M4092.6,3789.6 L1697.9,-3.5"/>
<path d="M3317.7,3749.9 L-2471.7,344.3"/>
<path d="M3317.7,3749.9 L1661.6,-3.2"/>
<path d="M4295.9,3541.2 L-2379.3,332.0"/>
<path d="M2571.8,3711.7 L1625.9,-2.9"/>
<path d="M4150.4,2924.3 L-2290.9,320.3"/>
<path d="M1853.2,3674.9 L1590.7,-2.6"/>
<path d="M4456.1,2621.3 L-2206.4,309.0"/>
<path d="M1160.6,3639.5 L1556.1,-2.4"/>
<path d="M4320.0,2248.9 L-2125.6,298.2"/>
<path d="M492.6,3605.3 L1521.9,-2.1"/>
<path d="M4214.8,1961.1 L-2048.1,287.9"/>
<path d="M-152.2,3572.2 L1488.3,-1.8"/>
<path d="M4431.8,1803.6 L-1973.8,278.0"/>
<path d="M-775.0,3540.4 L1455.2,-1.6"/>
<path d="M4332.1,1602.9 L-1902.5,268.5"/>
<path d="M-1376.8,3509.5 L1422.6,-1.3"/>
<path d="M4249.8,1437.4 L-1833.9,259.4"/>
<path d="M-2446.5,3986.8 L1390.4,-1.0"/>
<path d="M4418.0,1340.3 L-1768.1,250.6"/>
<path d="M-2578.7,3043.0 L1327.4,-0.5"/>
<path d="M4483.7,1139.6 L-1643.7,234.0"/>
<path d="M-2623.6,2722.0 L1296.6,-0.3"/>
<path d="M4409.1,1042.1 L-1584.9,226.2"/>
<path d="M-2659.9,2462.9 L1266.3,-0.1"/>
<path d="M4344.1,957.0 L-1528.2,218.7"/>
<path d="M-2689.8,2249.4 L1236.3,0.2"/>
<path d="M4465.2,903.0 L-1473.5,211.4"/>
<path d="M-2714.8,2070.4 L1206.8,0.4"/>
<path d="M4403.0,834.0 L-1420.8,204.3"/>
<path d="M-2736.2,1918.1 L1177.7,0.6"/>
<path d="M4347.5,772.5 L-1369.8,197.5"/>
<path d="M-2754.5,1787.0 L1149.0,0.9"/>
<path d="M4451.8,731.9 L-1320.5,191.0"/>
<path d="M-2770.5,1673.0 L1120.6,1.1"/>
<path d="M4398.4,680.5 L-1272.8,184.6"/>
<path d="M-2784.5,1572.9 L1092.7,1.3"/>
<path d="M4492.9,645.8 L-1226.7,178.5"/>
<path d="M-2796.9,1484.3 L1065.1,1.5"/>
<path d="M4441.6,602.3 L-1182.0,172.5"/>
<path d="M-2807.9,1405.4 L1038.0,1.7"/>
<path d="M4394.9,562.7 L-1138.8,166.8"/>
<path d="M-2817.9,1334.6 L1011.1,1.9"/>
<path d="M4478.8,535.0 L-1096.8,161.2"/>
<path d="M-2826.8,1270.7 L984.6,2.2"/>
<path d="M4433.7,500.8 L-1056.2,155.8"/>
<path d="M-2834.9,1212.9 L958.5,2.4"/>
<path d="M4392.1,469.4 L-1016.8,150.5"/>
<path d="M-2842.3,1160.2 L932.7,2.6"/>
<path d="M4467.6,446.7 L-978.5,145.4"/>
<path d="M-2849.0,1112.0 L907.3,2.8"/>
<path d="M4427.3,419.2 L-941.4,140.5"/>
<path d="M-2855.2,1067.7 L882.1,3.0"/>
<path d="M4497.5,398.9 L-905.3,135.7"/>
<path d="M-2860.9,1027.0 L857.3,3.2"/>
<path d="M4458.4,374.7 L-870.2,131.0"/>
<path d="M-2866.2,989.3 L832.8,3.4"/>
<path d="M4422.0,352.1 L-836.1,126.5"/>
<path d="M-2871.1,954.4 L808.6,3.5"/>
<path d="M4486.3,335.0 L-803.0,122.0"/>
<path d="M-2875.6,922.0 L784.8,3.7"/>
<path d="M4450.8,314.8 L-770.7,117.7"/>
<path d="M-2879.9,891.7 L761.2,3.9"/>
<path d="M4417.6,296.0 L-739.3,113.6"/>
<path d="M-2883.8,863.5 L737.9,4.1"/>
<path d="M4476.8,281.3 L-708.7,109.5"/>
<path d="M-2887.5,837.0 L714.9,4.3"/>
<path d="M4444.4,264.3 L-679.0,105.5"/>
<path d="M-2891.0,812.2 L692.2,4.5"/>
<path d="M4413.9,248.3 L-650.0,101.7"/>
<path d="M-2894.3,788.9 L669.7,4.6"/>
<path d="M4468.7,235.5 L-621.7,97.9"/>
<path d="M-2897.3,766.9 L647.5,4.8"/>
<path d="M4438.9,221.1 L-594.1,94.2"/>
<path d="M-2900.2,746.2 L625.6,5.0"/>
<path d="M4490.9,209.3 L-567.3,90.6"/>
<path d="M-2903.0,726.6 L604.0,5.2"/>
<path d="M4461.8,196.1 L-541.1,87.2"/>
<path d="M-2905.6,708.0 L582.6,5.3"/>
<path d="M4434.1,183.6 L-515.5,83.7"/>
<path d="M-2908.0,690.5 L561.5,5.5"/>
<path d="M4482.8,173.2 L-490.5,80.4"/>
<path d="M-2910.4,673.8 L540.6,5.7"/>
<path d="M4455.7,161.8 L-466.1,77.2"/>
<path d="M-2912.6,657.9 L519.9,5.8"/>
<path d="M4430.0,151.0 L-442.3,74.0"/>
<path d="M-2914.7,642.8 L499.5,6.0"/>
<path d="M4475.6,141.6 L-419.0,70.9"/>
<path d="M-2916.7,628.5 L479.3,6.1"/>
<path d="M4450.4,131.7 L-396.3,67.9"/>
<path d="M-2918.6,614.8 L459.4,6.3"/>
<path d="M4494.1,123.0 L-374.1,64.9"/>
<path d="M-2920.5,601.7 L439.7,6.5"/>
<path d="M4469.4,113.8 L-352.3,62.0"/>
<path d="M-2922.2,589.1 L420.2,6.6"/>
<path d="M4445.7,105.0 L-331.1,59.2"/>
<path d="M-2923.9,577.2 L400.9,6.8"/>
<path d="M4487.0,97.1 L-310.3,56.4"/>
<path d="M-2925.5,565.7 L381.9,6.9"/>
<path d="M4463.8,89.0 L-290.0,53.7"/>
<path d="M-2927.0,554.7 L363.0,7.1"/>
<path d="M4441.5,81.2 L-270.0,51.1"/>
<path d="M-2928.5,544.1 L344.4,7.2"/>
<path d="M4480.6,74.0 L-250.6,48.5"/>
<path d="M-2929.9,534.0 L326.0,7.4"/>
<path d="M4458.8,66.8 L-231.5,45.9"/>
<path d="M-2931.3,524.3 L307.7,7.5"/>
<path d="M4496.4,60.0 L-212.8,43.4"/>
<path d="M-2932.6,514.9 L289.7,7.6"/>
<path d="M4474.9,53.3 L-194.5,41.0"/>
<path d="M-2933.9,505.9 L271.9,7.8"/>
<path d="M4454.2,46.8 L-176.6,38.6"/>
<path d="M-2935.1,497.2 L254.3,7.9"/>
<path d="M4490.1,40.6 L-159.0,36.3"/>
<path d="M-2936.3,488.8 L236.8,8.1"/>
<path d="M4469.8,34.5 L-141.8,34.0"/>
<path d="M-2937.4,480.7 L219.5,8.2"/>
<path d="M4450.2,28.7 L-124.9,31.7"/>
<path d="M-2938.5,473.0 L202.5,8.3"/>
<path d="M4484.4,23.0 L-108.3,29.5"/>
<path d="M-2939.5,465.4 L185.6,8.5"/>
<path d="M4465.1,17.5 L-92.1,27.3"/>
<path d="M-2940.6,458.2 L168.8,8.6"/>
<path d="M4498.2,12.1 L-76.1,25.2"/>
<path d="M-2941.5,451.1 L152.3,8.7"/>
<path d="M4479.2,7.0 L-60.5,23.1"/>
<path d="M-2942.5,444.3 L135.9,8.9"/>
<path d="M4460.8,2.0 L-45.2,21.1"/>
<path d="M-2943.4,437.7 L119.7,9.0"/>
<path d="M4492.6,-3.0 L-30.1,19.1"/>
<path d="M-2944.3,431.4 L103.7,9.1"/>
<path d="M4474.4,-7.7 L-15.4,17.1"/>
<path d="M-2945.2,425.2 L87.8,9.2"/>
<path d="M4456.9,-12.2 L-0.9,15.2"/>
<path d="M-2946.0,419.2 L72.1,9.4"/>
<path d="M4487.4,-16.9 L13.4,13.3"/>
<path d="M-2946.8,413.4 L56.5,9.5"/>
<path d="M4470.1,-21.1 L27.4,11.4"/>
<path d="M-2947.6,407.7 L41.1,9.6"/>
<path d="M4499.6,-25.6 L41.1,9.6"/>
</g></g>
<mask id="mO" maskUnits="userSpaceOnUse" x="0" y="0" width="1501" height="1030"><rect width="1501" height="1030" fill="#fff"/><path d="M699.7,424.0 C701.5,417.2 705.2,411.1 709.4,406.6 C713.6,402.1 716.9,402.4 725.0,396.9 C733.1,391.4 749.9,378.5 758.0,373.6 C766.1,368.8 768.0,368.1 773.5,367.8 C779.0,367.5 779.0,364.9 791.0,371.7 C803.0,378.5 829.8,395.2 845.3,408.5 C860.8,421.8 872.9,436.1 884.2,451.3 C895.5,466.5 905.5,481.7 913.3,499.8 C921.1,517.9 926.8,543.6 930.8,560.0 C934.8,576.4 937.0,583.5 937.6,598.3 C938.2,613.1 937.1,636.4 934.7,648.7 C932.3,661.0 929.8,662.6 923.0,672.0 C916.2,681.4 901.4,697.2 893.9,705.0 C886.4,712.8 883.1,716.0 878.3,718.6 C873.4,721.2 870.3,721.9 864.8,720.6 C859.3,719.3 855.0,716.1 845.3,710.9 C835.6,705.7 816.9,697.0 806.5,689.5 C796.1,682.0 789.7,673.6 783.2,666.2 C776.7,658.8 770.9,653.0 767.7,644.9 C764.5,636.8 765.4,624.5 763.8,617.7 C762.2,610.9 762.2,612.1 758.0,604.0 C753.8,595.9 746.2,579.7 738.5,569.0 C730.8,558.3 717.9,547.8 712.0,540.0 C706.1,532.2 705.0,527.4 703.0,522.0 C701.0,516.6 700.4,520.0 699.7,507.6 C699.0,495.2 698.7,461.3 698.7,447.4 C698.7,433.5 697.9,430.8 699.7,424.0Z" fill="#000"/><path d="M660,470 L820,470 L820,625 L660,625Z" fill="#000"/></mask>
<clipPath id="csil"><path d="M990.2,757.7 L957.4,810.3 L956.0,812.5 L954.6,814.7 L953.2,816.8 L951.7,819.0 L950.3,821.1 L948.8,823.2 L947.3,825.3 L945.8,827.4 L944.2,829.5 L942.7,831.5 L941.1,833.5 L939.5,835.6 L937.9,837.5 L936.2,839.5 L934.5,841.5 L932.9,843.4 L931.2,845.3 L929.4,847.2 L927.7,849.1 L925.9,851.0 L924.2,852.8 L922.4,854.7 L920.6,856.5 L918.7,858.3 L916.9,860.0 L915.0,861.8 L913.1,863.5 L911.2,865.2 L909.3,866.9 L907.4,868.6 L905.4,870.2 L903.4,871.9 L901.4,873.5 L899.4,875.1 L897.4,876.6 L895.3,878.2 L893.3,879.7 L891.2,881.2 L889.1,882.7 L887.0,884.2 L884.9,885.6 L882.7,887.0 L880.6,888.4 L878.4,889.8 L876.2,891.2 L874.0,892.5 L871.8,893.8 L869.6,895.1 L867.3,896.4 L865.1,897.6 L862.8,898.8 L860.5,900.0 L858.2,901.2 L855.9,902.4 L853.6,903.5 L851.2,904.6 L848.9,905.7 L846.5,906.8 L844.1,907.8 L841.7,908.8 L839.3,909.8 L836.9,910.8 L834.5,911.7 L832.0,912.7 L829.6,913.6 L827.1,914.4 L824.6,915.3 L822.2,916.1 L819.7,916.9 L817.2,917.7 L814.6,918.5 L812.1,919.2 L809.6,919.9 L807.0,920.6 L804.4,921.2 L801.9,921.9 L799.3,922.5 L796.7,923.1 L794.1,923.6 L791.5,924.2 L788.9,924.7 L786.3,925.2 L783.6,925.7 L781.0,926.1 L778.4,926.5 L775.7,926.9 L773.0,927.3 L770.4,927.6 L767.7,927.9 L765.0,928.2 L762.3,928.5 L759.6,928.7 L756.9,929.0 L754.2,929.2 L751.5,929.3 L748.8,929.5 L746.0,929.6 L743.3,929.7 L740.6,929.8 L737.8,929.8 L735.1,929.8 L732.3,929.8 L729.6,929.8 L726.8,929.7 L724.1,929.6 L721.3,929.5 L718.5,929.4 L715.8,929.3 L713.0,929.1 L710.2,928.9 L707.4,928.7 L704.7,928.4 L701.9,928.1 L699.1,927.8 L696.3,927.5 L693.5,927.1 L690.7,926.8 L687.9,926.4 L685.2,925.9 L682.4,925.5 L679.6,925.0 L676.8,924.5 L674.0,924.0 L671.2,923.4 L668.4,922.9 L665.6,922.3 L662.8,921.7 L660.0,921.0 L657.3,920.3 L654.5,919.6 L651.7,918.9 L648.9,918.2 L646.1,917.4 L643.4,916.6 L640.6,915.8 L637.8,915.0 L635.1,914.1 L632.3,913.2 L629.5,912.3 L626.8,911.4 L624.0,910.4 L621.3,909.5 L618.5,908.5 L615.8,907.4 L613.1,906.4 L610.3,905.3 L607.6,904.2 L604.9,903.1 L602.2,902.0 L599.5,900.8 L596.8,899.6 L594.1,898.4 L591.4,897.2 L588.7,895.9 L586.0,894.7 L583.4,893.4 L580.7,892.0 L578.0,890.7 L575.4,889.3 L572.8,887.9 L570.1,886.5 L567.5,885.1 L564.9,883.7 L562.3,882.2 L559.7,880.7 L557.1,879.2 L554.5,877.6 L552.0,876.1 L549.4,874.5 L546.8,872.9 L544.3,871.3 L541.8,869.7 L539.3,868.0 L536.8,866.3 L534.3,864.6 L531.8,862.9 L529.3,861.2 L526.8,859.4 L524.4,857.6 L521.9,855.8 L519.5,854.0 L517.1,852.2 L514.7,850.3 L512.3,848.5 L509.9,846.6 L507.6,844.7 L505.2,842.7 L502.9,840.8 L500.5,838.8 L498.2,836.8 L495.9,834.8 L493.6,832.8 L491.4,830.8 L489.1,828.7 L486.9,826.7 L484.7,824.6 L482.4,822.5 L480.2,820.4 L478.1,818.2 L475.9,816.1 L473.7,813.9 L471.6,811.7 L469.5,809.5 L467.4,807.3 L465.3,805.1 L463.2,802.8 L461.2,800.6 L459.1,798.3 L457.1,796.0 L455.1,793.7 L453.1,791.4 L451.1,789.0 L449.2,786.7 L447.2,784.3 L445.3,781.9 L443.4,779.5 L441.5,777.1 L439.7,774.7 L437.8,772.3 L436.0,769.8 L434.2,767.4 L432.4,764.9 L430.6,762.4 L428.9,759.9 L427.1,757.4 L425.4,754.9 L423.7,752.4 L422.0,749.8 L420.4,747.3 L418.7,744.7 L417.1,742.2 L415.5,739.6 L413.9,737.0 L412.4,734.4 L410.8,731.8 L409.3,729.1 L407.8,726.5 L406.3,723.9 L404.9,721.2 L403.5,718.5 L402.0,715.9 L400.6,713.2 L399.3,710.5 L397.9,707.8 L396.6,705.1 L395.3,702.4 L394.0,699.7 L392.7,696.9 L391.5,694.2 L390.3,691.5 L389.1,688.7 L387.9,686.0 L386.7,683.2 L385.6,680.5 L384.5,677.7 L383.4,674.9 L382.3,672.1 L381.3,669.3 L380.3,666.5 L379.3,663.7 L378.3,660.9 L377.4,658.1 L376.4,655.3 L375.5,652.5 L374.6,649.7 L373.8,646.9 L372.9,644.0 L372.1,641.2 L371.3,638.4 L370.6,635.5 L369.8,632.7 L369.1,629.9 L368.4,627.0 L367.7,624.2 L367.1,621.3 L366.5,618.5 L365.9,615.7 L365.3,612.8 L364.7,610.0 L364.2,607.1 L363.7,604.3 L363.2,601.4 L362.7,598.6 L362.3,595.7 L361.9,592.9 L361.5,590.0 L361.2,587.2 L360.8,584.3 L360.5,581.5 L360.2,578.6 L359.9,575.8 L359.7,573.0 L359.5,570.1 L359.3,567.3 L359.1,564.5 L359.0,561.6 L358.9,558.8 L358.8,556.0 L358.7,553.2 L358.7,550.4 L358.6,547.6 L358.6,544.8 L358.7,542.0 L358.7,539.2 L358.8,536.4 L358.9,533.6 L359.0,530.8 L359.2,528.0 L359.3,525.3 L359.5,522.5 L359.8,519.7 L360.0,517.0 L360.3,514.2 L360.6,511.5 L360.9,508.8 L361.2,506.0 L361.6,503.3 L362.0,500.6 L362.4,497.9 L362.8,495.2 L363.3,492.5 L363.8,489.9 L364.3,487.2 L364.8,484.5 L365.4,481.9 L366.0,479.3 L366.6,476.6 L367.2,474.0 L367.9,471.4 L368.5,468.8 L369.2,466.2 L370.0,463.6 L370.7,461.1 L371.5,458.5 L372.3,455.9 L373.1,453.4 L373.9,450.9 L374.8,448.4 L375.7,445.9 L376.6,443.4 L377.5,440.9 L378.5,438.4 L379.5,436.0 L380.5,433.5 L381.5,431.1 L382.5,428.7 L383.6,426.3 L384.7,423.9 L385.8,421.5 L387.0,419.2 L388.1,416.8 L389.3,414.5 L390.5,412.2 L391.7,409.9 L393.0,407.6 L394.2,405.3 L395.5,403.1 L396.9,400.8 L398.2,398.6 L399.5,396.4 L400.9,394.2 L402.3,392.0 L403.7,389.8 L405.2,387.7 L406.6,385.6 L408.1,383.5 L409.6,381.4 L411.1,379.3 L412.7,377.2 L414.2,375.2 L415.8,373.1 L417.4,371.1 L419.0,369.1 L420.7,367.2 L422.4,365.2 L424.0,363.3 L425.7,361.3 L427.5,359.4 L429.2,357.6 L431.0,355.7 L432.7,353.8 L434.5,352.0 L436.3,350.2 L438.2,348.4 L440.0,346.6 L441.9,344.9 L443.8,343.2 L445.7,341.4 L447.6,339.8 L449.5,338.1 L451.5,336.4 L453.5,334.8 L455.5,333.2 L457.5,331.6 L459.5,330.0 L461.6,328.5 L463.6,327.0 L465.7,325.5 L467.8,324.0 L469.9,322.5 L472.0,321.1 L474.2,319.6 L476.3,318.2 L478.5,316.9 L480.7,315.5 L482.9,314.2 L485.1,312.9 L487.3,311.6 L489.6,310.3 L491.8,309.1 L494.1,307.8 L496.4,306.6 L498.7,305.5 L501.0,304.3 L503.3,303.2 L557.1,277.1 L559.4,276.0 L561.6,275.0 L563.8,273.9 L566.1,272.9 L568.4,272.0 L570.7,271.0 L572.9,270.1 L575.3,269.2 L577.6,268.3 L579.9,267.4 L582.2,266.6 L584.6,265.8 L587.0,265.0 L589.3,264.2 L591.7,263.4 L594.1,262.7 L596.5,262.0 L598.9,261.3 L601.3,260.7 L603.8,260.0 L606.2,259.4 L608.7,258.8 L611.1,258.2 L613.6,257.7 L616.1,257.2 L618.5,256.7 L621.0,256.2 L623.5,255.7 L626.0,255.3 L628.6,254.9 L631.1,254.5 L633.6,254.1 L636.2,253.8 L638.7,253.5 L641.2,253.2 L643.8,252.9 L646.4,252.7 L648.9,252.5 L651.5,252.3 L654.1,252.1 L656.7,251.9 L659.3,251.8 L661.9,251.7 L664.5,251.6 L667.1,251.6 L669.7,251.5 L672.3,251.5 L674.9,251.6 L677.5,251.6 L680.2,251.7 L682.8,251.7 L685.4,251.8 L688.1,252.0 L690.7,252.1 L693.3,252.3 L696.0,252.5 L698.6,252.7 L701.3,253.0 L703.9,253.3 L706.6,253.6 L709.2,253.9 L711.9,254.2 L714.5,254.6 L717.2,255.0 L719.8,255.4 L722.5,255.8 L725.2,256.3 L727.8,256.8 L730.5,257.3 L733.1,257.8 L735.8,258.4 L738.4,258.9 L741.1,259.5 L743.7,260.2 L746.4,260.8 L749.0,261.5 L751.7,262.2 L754.3,262.9 L757.0,263.6 L759.6,264.4 L762.3,265.1 L764.9,265.9 L767.5,266.8 L770.2,267.6 L772.8,268.5 L775.4,269.4 L778.0,270.3 L780.6,271.2 L783.2,272.2 L785.9,273.2 L788.5,274.2 L791.0,275.2 L793.6,276.2 L796.2,277.3 L798.8,278.4 L801.4,279.5 L804.0,280.6 L806.5,281.8 L809.1,283.0 L811.6,284.2 L814.2,285.4 L816.7,286.6 L819.2,287.9 L821.8,289.2 L824.3,290.5 L826.8,291.8 L829.3,293.1 L831.8,294.5 L834.3,295.9 L836.7,297.3 L839.2,298.7 L841.7,300.1 L844.1,301.6 L846.6,303.1 L849.0,304.6 L851.4,306.1 L853.8,307.6 L856.2,309.2 L858.6,310.8 L861.0,312.4 L863.4,314.0 L865.7,315.6 L868.1,317.3 L870.4,319.0 L872.8,320.6 L875.1,322.4 L877.4,324.1 L879.7,325.8 L882.0,327.6 L884.2,329.4 L886.5,331.2 L888.7,333.0 L891.0,334.8 L893.2,336.7 L895.4,338.5 L897.6,340.4 L899.8,342.3 L902.0,344.2 L904.1,346.2 L906.3,348.1 L908.4,350.1 L910.5,352.1 L912.6,354.1 L914.7,356.1 L916.8,358.1 L918.8,360.2 L920.9,362.2 L922.9,364.3 L924.9,366.4 L926.9,368.5 L928.9,370.6 L930.8,372.8 L932.8,374.9 L934.7,377.1 L936.7,379.3 L938.6,381.4 L940.4,383.6 L942.3,385.9 L944.2,388.1 L946.0,390.3 L947.8,392.6 L949.6,394.9 L951.4,397.2 L953.2,399.5 L954.9,401.8 L956.7,404.1 L958.4,406.4 L960.1,408.8 L961.8,411.1 L963.4,413.5 L965.1,415.9 L966.7,418.3 L968.3,420.7 L969.9,423.1 L971.5,425.5 L973.0,427.9 L974.6,430.4 L976.1,432.8 L977.6,435.3 L979.1,437.7 L980.5,440.2 L981.9,442.7 L983.4,445.2 L984.8,447.7 L986.1,450.2 L987.5,452.8 L988.8,455.3 L990.2,457.8 L991.5,460.4 L992.7,462.9 L994.0,465.5 L995.2,468.1 L996.4,470.7 L997.6,473.2 L998.8,475.8 L1000.0,478.4 L1001.1,481.0 L1002.2,483.6 L1003.3,486.3 L1004.4,488.9 L1005.4,491.5 L1006.5,494.1 L1007.5,496.8 L1008.5,499.4 L1009.4,502.1 L1010.4,504.7 L1011.3,507.4 L1012.2,510.0 L1013.1,512.7 L1013.9,515.4 L1014.7,518.0 L1015.6,520.7 L1016.3,523.4 L1017.1,526.1 L1017.9,528.8 L1018.6,531.4 L1019.3,534.1 L1019.9,536.8 L1020.6,539.5 L1021.2,542.2 L1021.8,544.9 L1022.4,547.6 L1023.0,550.3 L1023.5,553.0 L1024.1,555.7 L1024.6,558.4 L1025.0,561.1 L1025.5,563.8 L1025.9,566.5 L1026.3,569.2 L1026.7,571.9 L1027.0,574.6 L1027.4,577.3 L1027.7,580.0 L1028.0,582.6 L1028.3,585.3 L1028.5,588.0 L1028.7,590.7 L1028.9,593.4 L1029.1,596.1 L1029.2,598.8 L1029.4,601.4 L1029.5,604.1 L1029.6,606.8 L1029.6,609.4 L1029.7,612.1 L1029.7,614.8 L1029.7,617.4 L1029.6,620.1 L1029.6,622.7 L1029.5,625.4 L1029.4,628.0 L1029.3,630.6 L1029.1,633.3 L1028.9,635.9 L1028.7,638.5 L1028.5,641.1 L1028.3,643.7 L1028.0,646.3 L1027.7,648.9 L1027.4,651.5 L1027.1,654.1 L1026.7,656.6 L1026.3,659.2 L1025.9,661.7 L1025.5,664.3 L1025.1,666.8 L1024.6,669.4 L1024.1,671.9 L1023.6,674.4 L1023.0,676.9 L1022.5,679.4 L1021.9,681.9 L1021.3,684.4 L1020.6,686.8 L1020.0,689.3 L1019.3,691.7 L1018.6,694.2 L1017.9,696.6 L1017.1,699.0 L1016.4,701.4 L1015.6,703.8 L1014.8,706.2 L1014.0,708.6 L1013.1,711.0 L1012.2,713.3 L1011.3,715.7 L1010.4,718.0 L1009.5,720.3 L1008.5,722.6 L1007.5,724.9 L1006.5,727.2 L1005.5,729.5 L1004.4,731.7 L1003.4,734.0 L1002.3,736.2 L1001.2,738.4 L1000.0,740.6 L998.9,742.8 L997.7,745.0 L996.5,747.1 L995.3,749.3 L994.1,751.4 L992.8,753.5 L991.5,755.6Z"/></clipPath>
<g opacity="0.45" clip-path="url(#csil)"><path d="M4452.9,1233.7 L-1704.7,242.2" stroke="#e02020" stroke-width="1.2" fill="none"/></g>
<g opacity="0.45" clip-path="url(#cface)" mask="url(#mO)"><path d="M-2781.5,3682.2 L1358.7,-0.8" stroke="#30c030" stroke-width="1.2" fill="none"/></g>
<path d="M662,499 L707,468 L707,590 L662,604Z" fill="#e0a040" fill-opacity="0.05"/>
<path d="M670,507 L776,522 L776,618 L670,614Z" fill="#f0a030" fill-opacity="0.1"/>
<path d="M679,620 L722,582 L817,597 L776,620Z" fill="#f0a030" fill-opacity="0.1"/>
<ellipse cx="658.6" cy="623" rx="31.4" ry="33" transform="rotate(-15 658.6 623)" fill="url(#ghub2)" stroke="#222" stroke-width="1.1"/>
<line x1="656" y1="489.5" x2="657.8" y2="614" stroke="#0a0af5" stroke-width="2.6" stroke-dasharray="33.4 4.4 8 4.4" stroke-dashoffset="8.7"/>
<line x1="660" y1="621" x2="713" y2="575" stroke="#1a8ee0" stroke-opacity="0.8" stroke-width="3.4" stroke-linecap="round"/>
<line x1="664" y1="625" x2="696" y2="630" stroke="#ff1414" stroke-width="3"/>
<circle cx="658" cy="623" r="6.5" fill="#e6e6e4" stroke="#555" stroke-width="1"/>
<g transform="rotate(35 818 705)"><circle cx="818" cy="705" r="13" fill="#6fa7c8" fill-opacity="0.75" stroke="#cde0ea" stroke-width="1.6"/><rect x="812" y="694" width="4" height="22" fill="#dbe8ee"/><rect x="820" y="694" width="4" height="22" fill="#dbe8ee"/></g>
</svg>

<!-- title bar -->
<div class="a" id="title"></div>
<div class="a" style="left:0;top:0;width:1501px;height:1px;background:#1c2438"></div>
<div class="a" style="left:845px;top:0;width:60px;height:1px;background:#d8b830"></div>
<div class="a" style="left:0;top:0;width:1px;height:1030px;background:#1c2438"></div>
<div class="a" style="left:0;top:1029px;width:1501px;height:1px;background:#2a3040"></div>
<div class="t" style="left:35px;top:11px;font-size:15.3px;color:#6e6e6e">Autodesk Fusion 360 (Education License)</div>

<!-- tab strip -->
<div class="a" id="tabs"></div>
<div class="a" style="left:242px;top:43px;width:990px;height:35px;background:#f2f2f2;border-radius:6px 6px 0 0"></div>
<div class="a" style="left:1237px;top:43px;width:35px;height:35px;background:#bdbdbd;border-radius:4px 4px 0 0"></div>
<div class="a" style="left:1499px;top:38px;width:2px;height:145px;background:#f3f3f3"></div>
<div class="t" style="left:714px;top:53px;font-size:15px;color:#3c3c3c">Untitled*</div>

<!-- ribbon -->
<div class="a" id="ribbon"></div>
<div class="a" style="left:0;top:179px;width:1499px;height:2px;background:#d2d2d2"></div>
<div class="a" style="left:1498px;top:78px;width:1px;height:103px;background:#dadada"></div>
<div class="a" style="left:16px;top:91px;width:137px;height:77px;border:1px solid #cfcfcf;border-radius:5px;background:#f2f2f2"></div>
<div class="t" style="left:52px;top:121px;font-size:14px;font-weight:bold;color:#333">DESIGN<span class="caret" style="border-top-color:#333;margin-left:4px"></span></div>

<div class="t rt" style="left:188px;top:85px;color:#0696d7">SOLID</div>
<div class="a" style="left:174px;top:104px;width:71px;height:3px;background:#0696d7"></div>
<div class="t rt" style="left:286px;top:85px">SURFACE</div>
<div class="t rt" style="left:408px;top:85px">MESH</div>
<div class="t rt" style="left:506px;top:85px">SHEET METAL</div>
<div class="t rt" style="left:660px;top:85px">PLASTIC</div>
<div class="t rt" style="left:776px;top:85px">UTILITIES</div>

<div class="t lbl" style="left:184px;top:161px">CREATE<span class="caret"></span></div>
<div class="t lbl" style="left:298px;top:161px">AUTOMATE<span class="caret"></span></div>
<div class="t lbl" style="left:537px;top:161px">MODIFY<span class="caret"></span></div>
<div class="t lbl" style="left:757px;top:161px">ASSEMBLE<span class="caret"></span></div>
<div class="t lbl" style="left:879px;top:161px">CONSTRUCT<span class="caret"></span></div>
<div class="t lbl" style="left:1008px;top:161px">INSPECT<span class="caret"></span></div>
<div class="t lbl" style="left:1153px;top:161px">INSERT<span class="caret"></span></div>
<div class="t lbl" style="left:1289px;top:161px">SELECT<span class="caret"></span></div>
<div class="sep" style="left:278px"></div>
<div class="sep" style="left:402px"></div>
<div class="sep" style="left:738px"></div>
<div class="sep" style="left:861px"></div>
<div class="sep" style="left:991px"></div>
<div class="sep" style="left:1096px"></div>
<div class="sep" style="left:1271px"></div>

<!-- ribbon + tabstrip icons -->
<svg class="a" style="left:0;top:0" width="1501" height="182">
 <!-- title logo -->
 <path d="M12,10 L14,9 L27,9 L28,10.5 L28,28.5 L13,28.5 L12,27Z" fill="#ff6a00"/>
 <path d="M11.5,10.5 L13.5,9.3 L13.5,24 L11.5,24Z" fill="#ff9040"/>
 <rect x="12.5" y="23" width="16" height="6" fill="#a8430b"/>
 <path d="M17.5,12.5 L23.5,12.5 L23.5,14.5 L19.8,14.5 L19.8,16.8 L23,16.8 L23,18.8 L19.8,18.8 L19.8,22 L17.5,22Z" fill="#fff"/>
 <text x="16.5" y="27.8" font-family="Liberation Sans" font-size="4.5" font-weight="bold" fill="#f0c0a0">360</text>
 <!-- window controls -->
 <g stroke="#555" stroke-width="1" fill="none">
  <line x1="1348" y1="18.5" x2="1360" y2="18.5"/>
  <rect x="1405.5" y="13.5" width="11.5" height="11.5"/>
  <path d="M1464.5,13.5 L1476.5,25.5 M1476.5,13.5 L1464.5,25.5" stroke-width="1.2"/>
 </g>
 <!-- tab strip left icons -->
 <g fill="#575757">
  <rect x="12" y="49" width="5" height="5"/><rect x="18.5" y="49" width="5" height="5"/><rect x="25" y="49" width="5" height="5"/>
  <rect x="12" y="55.5" width="5" height="5"/><rect x="18.5" y="55.5" width="5" height="5"/><rect x="25" y="55.5" width="5" height="5"/>
  <rect x="12" y="62" width="5" height="5"/><rect x="18.5" y="62" width="5" height="5"/><rect x="25" y="62" width="5" height="5"/>
  <path d="M54,48 L65,48 L70,53 L70,68 L54,68Z"/>
  <path d="M77,56 L86,56 L81.5,62Z"/>
  <path d="M110,49 L125,49 L127,51 L127,67 L112,67 L110,65Z"/>
  <path d="M176,56 L185,56 L180.5,62Z"/>
 </g>
 <path d="M65,48 L65,53 L70,53" fill="#d8d8d8"/>
 <rect x="114" y="50" width="9" height="5" fill="#c9c9c9"/><rect x="115" y="59" width="8" height="8" fill="#c9c9c9"/><rect x="117" y="61" width="4" height="6" fill="#575757"/>
 <path d="M166,65 C166,58 162,55 155,56" fill="none" stroke="#575757" stroke-width="2.2"/><path d="M151,56 L157,51 L157,61Z" fill="#575757"/>
 <path d="M201,65 C201,58 205,55 212,56" fill="none" stroke="#a2a2a2" stroke-width="2.2"/><path d="M216.5,56 L210.5,51 L210.5,61Z" fill="#a2a2a2"/>
 <path d="M225,56 L234,56 L229.5,62Z" fill="#a2a2a2"/>
 <!-- Untitled cube -->
 <path d="M697,50 L706,54.5 L706,66 L697,70.5 L688.5,66 L688.5,54.5Z" fill="#f77f1a"/>
 <path d="M697,50 L706,54.5 L697,59 L688.5,54.5Z" fill="#ffb060"/>
 <path d="M697,59 L706,54.5 L706,66 L697,70.5Z" fill="#e06a10"/>
 <!-- tab close -->
 <path d="M1213.5,56 L1223.5,66 M1223.5,56 L1213.5,66" stroke="#555" stroke-width="1.5"/>
 <!-- plus -->
 <path d="M1246.5,60 L1264,60 M1255.3,51.5 L1255.3,68.5" stroke="#7a7a7a" stroke-width="2.8"/>
 <!-- right icons -->
 <g fill="#6a6a6a">
  <circle cx="1338.5" cy="58.5" r="10"/>
  <circle cx="1421" cy="58.5" r="10"/>
 </g>
 <circle cx="1297.5" cy="58" r="8" fill="none" stroke="#666" stroke-width="3.2"/><path d="M1297,55 L1300,52 L1303,55 L1300,57.5Z" fill="#666"/><path d="M1298,56 L1302,53" stroke="#666" stroke-width="2"/>
 <circle cx="1338.5" cy="58.5" r="7.5" fill="#bdbdbd"/><circle cx="1338.5" cy="58.5" r="6" fill="#6a6a6a"/>
 <path d="M1338.5,53 L1338.5,59 L1343,59" fill="none" stroke="#d0d0d0" stroke-width="1.6"/>
 <path d="M1372,64 L1374,61 L1374,56 A5.5,5.5 0 0 1 1385,56 L1385,61 L1387,64Z" fill="#6a6a6a"/><rect x="1377" y="65" width="5" height="2" fill="#6a6a6a"/>
 <circle cx="1385.5" cy="52" r="3.3" fill="#1e90e0"/>
 <text x="1416" y="64" font-family="Liberation Sans" font-size="15" font-weight="bold" fill="#cfcfcf">?</text>
 <defs><linearGradient id="gav" x1="0" y1="0" x2="0" y2="1"><stop offset="0" stop-color="#b9c8dc"/><stop offset="1" stop-color="#8fa5c2"/></linearGradient><clipPath id="cav"><circle cx="1469" cy="58.5" r="15"/></clipPath></defs>
 <circle cx="1469" cy="58.5" r="15" fill="url(#gav)"/>
 <g clip-path="url(#cav)" fill="#536378"><ellipse cx="1469" cy="53" rx="7.5" ry="9"/><ellipse cx="1469" cy="75" rx="14" ry="8"/><rect x="1466" y="60" width="6" height="8"/></g>

 <!-- CREATE -->
 <path d="M172.3,121.9 L175.2,117.2 L192,117.2 L192,132.3 L187.4,136.9 L172.3,136.9Z" fill="#69ade6"/>
 <path d="M172.3,121.9 L175.2,117.2 L192,117.2 L187.4,121.9Z" fill="#8dcaf6"/>
 <path d="M187.4,121.9 L192,117.2 L192,132.3 L187.4,136.9Z" fill="#4a8fd0"/>
 <path d="M172.3,136.9 L187.7,136.9 L187.7,151.5 L172.3,151.5Z" fill="#d8d8d8" stroke="#5a5a5a" stroke-width="1.4"/>
 <path d="M187.7,136.9 L190,134.2 L205,134.2 L205,147 L202.4,151.5 L187.7,151.5Z" fill="#d8d8d8" stroke="#5a5a5a" stroke-width="1.4"/>
 <path d="M202.4,136.9 L205,134.2 L205,147 L202.4,151.5Z" fill="#bcbcbc"/>
 <path d="M201.6,112 L203,118.5 L208.8,114.9 L205.2,120.7 L211.8,122.2 L205.2,123.7 L208.8,129.5 L203,125.9 L201.6,132.4 L200.2,125.9 L194.4,129.5 L198,123.7 L191.4,122.2 L198,120.7 L194.4,114.9 L200.2,118.5Z" fill="#f5a300"/>
 <g fill="#555"><rect x="226" y="112" width="4" height="4"/><rect x="260" y="112" width="4" height="4"/><rect x="226" y="145.5" width="4" height="4"/><rect x="235" y="120.5" width="3.5" height="3.5"/><rect x="251" y="120.5" width="3.5" height="3.5"/><rect x="235" y="136.5" width="3.5" height="3.5"/></g>
 <g stroke="#555" fill="none"><path d="M231,113.8 L259,113.8 M228,117 L228,144 M261.5,117 L261.5,133 M231,147.5 L249,147.5" stroke-width="1.5"/><path d="M239.5,122.3 L250,122.3 M236.8,125 L236.8,135 M240,138.5 Q250,136 253,125" stroke-width="1"/></g>
 <path d="M255,134 L260,134 L260,140 L266,140 L266,145 L260,145 L260,151 L255,151 L255,145 L249,145 L249,140 L255,140Z" fill="#22b14c"/>
 <!-- AUTOMATE -->
 <path d="M327,120 Q334,125 341,125 Q348,125 355,120 L356,124 Q348,130 345,134 L342,142 L338,142 L336,134 Q333,128 326,124Z" fill="#5aa8e6"/>
 <circle cx="339.5" cy="145" r="5.5" fill="#5aa8e6"/><circle cx="339.5" cy="145" r="3.8" fill="#f4f4f4" stroke="#555" stroke-width="1"/>
 <rect x="321" y="112" width="8" height="7" fill="#fff" stroke="#555" stroke-width="1.4"/>
 <circle cx="355" cy="121" r="4.5" fill="#fff" stroke="#555" stroke-width="1"/>
 <!-- MODIFY -->
 <path d="M419.4,118.9 L422.5,112 L427,112 L427,151.4 L419.4,151.4Z" fill="#dcdcdc" stroke="#666" stroke-width="1"/>
 <path d="M427,118.9 L432.4,112 L445.7,112 L439.3,118.9Z" fill="#8dcaf6"/>
 <path d="M427,118.9 L439.3,118.9 L439.3,151.4 L427,151.4Z" fill="#69ade6"/>
 <path d="M439.3,118.9 L445.7,112 L445.7,144.5 L439.3,151.4Z" fill="#4a8fd0"/>
 <path d="M443,131 L452,131" stroke="#222" stroke-width="1.4"/><path d="M450,127.5 L455,131 L450,134.5Z" fill="#222"/>
 <path d="M471.3,121 L480,112 L495,112 L501.7,118 L510.6,127 L510.6,142.3 L501.7,151.4 L471.3,151.4Z" fill="#d9d9d9" stroke="#666" stroke-width="1"/>
 <path d="M486,120 Q497,118 501,133 L510.6,127 Q506,113 495,112Z" fill="#62a8e2"/>
 <path d="M501.7,133 L510.6,127 L510.6,142.3 L501.7,151.4Z" fill="#bdbdbd"/>
 <path d="M525.1,121.5 L534.2,112 L564.6,112 L555.5,121.5Z" fill="#efefef" stroke="#666" stroke-width="1"/>
 <path d="M525.1,121.5 L555.5,121.5 L555.5,151.4 L525.1,151.4Z" fill="#d9d9d9" stroke="#666" stroke-width="1"/>
 <path d="M555.5,121.5 L564.6,112 L564.6,142.3 L555.5,151.4Z" fill="#bdbdbd" stroke="#666" stroke-width="1"/>
 <rect x="530" y="126.9" width="20.2" height="19.7" fill="#f2f2f2"/>
 <path d="M530,126.9 L539.8,126.9 L539.8,137 L530,146.6Z" fill="#3f8ed2"/>
 <path d="M530,146.6 L539.8,137 L550.2,137 L550.2,146.6Z" fill="#8fcbf6"/>
 <path d="M591.3,116.7 L595.6,112 L618.5,112 L614.2,116.7Z" fill="#8dcaf6"/>
 <path d="M591.3,116.7 L614.2,116.7 L614.2,138.6 L601.4,138.6 L601.4,151.4 L578.5,151.4 L578.5,129 L591.3,129Z" fill="#69ade6"/>
 <path d="M578.5,129 L582.8,124.2 L591.3,124.2 L591.3,129Z" fill="#8dcaf6"/>
 <path d="M614.2,116.7 L618.5,112 L618.5,134.3 L614.2,138.6Z" fill="#4a8fd0"/>
 <path d="M601.4,138.6 L605.7,138.6 L605.7,147 L601.4,151.4Z" fill="#4a8fd0"/>
 <path d="M635,118.9 L641.9,112 L669.7,112 L662.2,118.9Z" fill="#8dcaf6"/>
 <rect x="635" y="118.9" width="27.2" height="12.8" fill="#69ade6"/>
 <path d="M662.2,118.9 L669.7,112 L669.7,124.8 L662.2,131.7Z" fill="#4a8fd0"/>
 <path d="M632.5,134.9 L662.8,134.9 L671.8,125.3" fill="none" stroke="#1a7fe0" stroke-width="1.7"/>
 <rect x="635" y="137.5" width="27.8" height="12.8" fill="#d9d9d9" stroke="#666" stroke-width="1"/>
 <path d="M662.8,137.5 L669.7,132.2 L669.7,143.4 L662.8,150.3Z" fill="#bdbdbd"/>
 <g fill="#333"><path d="M705.9,111.5 L711,119 L700.8,119Z"/><path d="M705.9,152 L711,144.5 L700.8,144.5Z"/><path d="M686,131.7 L693.5,126.6 L693.5,136.8Z"/><path d="M726,131.7 L718.5,126.6 L718.5,136.8Z"/></g>
 <path d="M705.9,117 L705.9,146.5 M691,131.7 L721,131.7" stroke="#333" stroke-width="2.2"/>
 <!-- ASSEMBLE -->
 <path d="M753.8,121.9 L756.5,117.5 L773,117.5 L769.2,121.9Z" fill="#8dcaf6"/>
 <rect x="753.8" y="121.9" width="15.4" height="14.6" fill="#69ade6"/>
 <path d="M769.2,121.9 L773,117.5 L773,132 L769.2,136.5Z" fill="#4a8fd0"/>
 <rect x="753.8" y="136.5" width="15.4" height="14.6" fill="#d8d8d8" stroke="#5a5a5a" stroke-width="1.4"/>
 <path d="M769.2,136.5 L772,133.5 L788,133.5 L788,146.8 L784.6,151.1 L769.2,151.1Z" fill="#d8d8d8" stroke="#5a5a5a" stroke-width="1.4"/>
 <path d="M782.8,112 L784,118.5 L789.2,115.2 L786,120.8 L792,122.3 L786,123.8 L789.2,129.3 L784,126 L782.8,132.5 L781.6,126 L776.4,129.3 L779.6,123.8 L773.6,122.3 L779.6,120.8 L776.4,115.2 L781.6,118.5Z" fill="#f5a300"/>
 <path d="M810.5,124 L816,116 L821.5,114.5 L825,116 L825.5,128 L820,130 L820,140 L814,147.5 L810.5,147.5Z" fill="#cfcfcf" stroke="#555" stroke-width="1"/>
 <path d="M836,118 L840,114 L845.5,120 L845.5,147 L840,148 L834,141 L830,141 L829,127 L833,126Z" fill="#d8d8d8" stroke="#555" stroke-width="1"/>
 <path d="M821,131 L821,138 M833,121 L833,127" stroke="#1a7fe0" stroke-width="1.6"/>
 <!-- CONSTRUCT -->
 <path d="M909.2,122.6 L920.2,111.6 L929.7,111.6 L920.2,122.6Z" fill="#eaeaea" stroke="#555" stroke-width="1"/>
 <rect x="909.2" y="122.6" width="11" height="27.9" fill="#dadada" stroke="#555" stroke-width="1"/>
 <path d="M920.2,122.6 L931.2,112.3 L931.2,138.5 L920.2,149.5Z" fill="#56c07a"/>
 <path d="M934.9,122.6 L945.9,112.3 L945.9,138.5 L934.9,149.5Z" fill="#e4956a"/>
 <!-- INSPECT -->
 <path d="M1027,127.6 L1061.5,127.6" stroke="#555" stroke-width="1.2"/>
 <path d="M1027,122 L1027,132.4 M1061.5,122 L1061.5,132.4" stroke="#555" stroke-width="1.4"/>
 <path d="M1028.5,127.6 L1033,125 L1033,130.2Z M1060,127.6 L1055.5,125 L1055.5,130.2Z" fill="#555"/>
 <rect x="1026.6" y="134.3" width="35.2" height="7.7" fill="#f5a300"/>
 <path d="M1030,134.3 L1030,137 M1034,134.3 L1034,138.5 M1038,134.3 L1038,137 M1042,134.3 L1042,138.5 M1046,134.3 L1046,137 M1050,134.3 L1050,138.5 M1054,134.3 L1054,137 M1058,134.3 L1058,138.5" stroke="#b06a00" stroke-width="0.9"/>
 <!-- INSERT -->
 <path d="M1119,112 L1144,112 L1151,119 L1151,151.6 L1119,151.6Z" fill="#f4f4f4" stroke="#666" stroke-width="1"/>
 <path d="M1144,112 L1151,119 L1144,119Z" fill="#f5a300"/>
 <rect x="1119" y="136" width="32.2" height="15.6" fill="#e8a418"/>
 <text x="1132.5" y="148" font-family="Liberation Sans" font-size="9.5" font-weight="bold" fill="#fff">SVG</text>
 <circle cx="1126" cy="143.8" r="4.2" fill="none" stroke="#222" stroke-width="1.3"/>
 <path d="M1110.5,121.5 L1125,121.5 L1125,117 L1133,124 L1125,131 L1125,126.5 L1110.5,126.5Z" fill="#1e88e5"/>
 <path d="M1171,124 L1176,118 L1203.9,114 L1203.9,143 L1198,148 L1171,148Z" fill="#dedede" stroke="#444" stroke-width="1"/>
 <path d="M1171,124 L1198,124 L1203.9,114 M1198,124 L1198,148" fill="none" stroke="#333" stroke-width="1.5"/>
 <path d="M1166.5,143 Q1170,133 1180,131 L1180,126.5 L1188,133 L1180,139.5 L1180,135 Q1173,136 1166.5,143Z" fill="#333"/>
 <rect x="1220.2" y="113.2" width="35.3" height="35.5" fill="#7ec6f7"/>
 <path d="M1220.2,148.7 L1220.2,134 Q1226,123 1232,128 Q1238,134 1242,138 Q1247,132 1252,137 L1255.5,140 L1255.5,148.7Z" fill="#3b8fd0"/>
 <circle cx="1247.5" cy="122" r="3.5" fill="#fbf3c0"/>
 <!-- SELECT -->
 <rect x="1301" y="112" width="34.8" height="26.4" fill="none" stroke="#2fb24c" stroke-width="1.3" stroke-dasharray="3.5 2.5"/>
 <path d="M1327.5,129.5 L1327.5,147 L1331.5,143.5 L1335,151 L1338,149.5 L1334.5,142.5 L1340,142.5Z" fill="#fff" stroke="#333" stroke-width="1.3" stroke-linejoin="round"/>
</svg>

<!-- browser -->
<div class="a" style="left:6px;top:190px;width:374px;height:30px;background:#f1f1f1;border:1px solid #cacaca;border-bottom:2px solid #c2c2c2"></div>
<svg class="a" style="left:12px;top:201px" width="14" height="9"><path d="M6,0 L0,4.5 L6,9Z M13,0 L7,4.5 L13,9Z" fill="#2e2e2e"/></svg>
<div class="t" style="left:37px;top:197px;font-size:14px;color:#5a5a5a">BROWSER</div>
<svg class="a" style="left:354px;top:198px" width="12" height="12"><circle cx="6" cy="6" r="5.5" fill="#2a2a2a"/><rect x="2.5" y="5" width="7" height="2" fill="#fff"/></svg>
<div class="a" style="left:376px;top:197px;width:2px;height:14px;background:#555"></div>

<div class="a" style="left:51px;top:227px;width:191px;height:25px;background:#efefef"></div>
<svg class="a" style="left:27px;top:232px" width="15" height="15"><path d="M14,0 L14,14 L0,14Z" fill="#555"/><path d="M12.5,3 L12.5,12.5 L3.5,12.5Z" fill="#bdbdbd"/></svg>
<div class="a" style="left:54px;top:229px;width:3px;height:20px;background:#5bd2dd"></div>
<svg class="a" style="left:61px;top:233px" width="20" height="13"><path d="M0.5,6.5 Q10,-3 19.5,6.5 Q10,16 0.5,6.5Z" fill="#a9a9a9"/><circle cx="10" cy="6.5" r="3.2" fill="#d6d6d6"/><circle cx="10" cy="6.5" r="1.6" fill="#a9a9a9"/></svg>
<div class="a" style="left:88px;top:229px;width:123px;height:20px;background:#909090"></div>
<div class="a" style="left:119px;top:229px;width:1px;height:20px;background:#a2a2a2"></div>
<svg class="a" style="left:92px;top:231px" width="21" height="18"><path d="M1,4 L4,1 L19,1 L19,14 L16,17 L1,17Z" fill="#e6e8ec" stroke="#222" stroke-width="1"/><path d="M1,4 L16,4 L19,1 M16,4 L16,17" fill="none" stroke="#555" stroke-width="0.8"/></svg>
<div class="t" style="left:130px;top:232px;font-size:14px;font-weight:bold;color:#fff">(Unsaved)</div>
<svg class="a" style="left:216px;top:232px" width="17" height="16"><circle cx="8.5" cy="8" r="7" fill="#fff" stroke="#333" stroke-width="1.4"/><circle cx="8.5" cy="8" r="3" fill="#222"/></svg>

<div class="a" style="left:74px;top:257px;width:172px;height:24px;background:#efefef"></div>
<div class="a" style="left:74px;top:287px;width:137px;height:24px;background:#efefef"></div>
<div class="a" style="left:74px;top:317px;width:123px;height:24px;background:#efefef"></div>
<div class="a" style="left:74px;top:347px;width:128px;height:24px;background:#efefef"></div>
<div class="a" style="left:74px;top:377px;width:143px;height:24px;background:#efefef"></div>

<svg class="a" style="left:50px;top:260px" width="14" height="140">
 <g fill="#e9e9e9" stroke="#3a3a3a" stroke-width="1.6" stroke-linejoin="round">
 <path d="M1.5,1.5 L12,9 L1.5,16.5Z"/>
 <path d="M1.5,31.5 L12,39 L1.5,46.5Z"/>
 <path d="M1.5,61.5 L12,69 L1.5,76.5Z"/>
 <path d="M1.5,91.5 L12,99 L1.5,106.5Z"/>
 <path d="M1.5,121.5 L12,129 L1.5,136.5Z"/>
 </g>
</svg>
<svg class="a" style="left:77px;top:259px" width="21" height="20"><g fill="#8b8b8b"><circle cx="10.5" cy="10" r="6.5"/><g stroke="#8b8b8b" stroke-width="3.4"><line x1="10.5" y1="0.5" x2="10.5" y2="19.5"/><line x1="1" y1="10" x2="20" y2="10"/><line x1="3.8" y1="3.3" x2="17.2" y2="16.7"/><line x1="17.2" y1="3.3" x2="3.8" y2="16.7"/></g></g><circle cx="10.5" cy="10" r="3.2" fill="#efefef"/></svg>
<div class="t" style="left:115px;top:262px;font-size:13.75px;color:#333a44">Document Settings</div>
<svg class="a" style="left:77px;top:290px" width="21" height="18"><path d="M0,2 L8,2 L8,4 L20,4 L20,17 L0,17Z" fill="#8b8b8b"/><rect x="0" y="0" width="8" height="1.4" fill="#9a9a9a"/></svg>
<div class="t" style="left:115px;top:292px;font-size:13.75px;color:#333a44">Named Views</div>

<svg class="a" style="left:77px;top:321px" width="21" height="15"><path d="M1,7.5 Q10.5,-2 20,7.5 Q10.5,17 1,7.5Z" fill="none" stroke="#a8a8a8" stroke-width="1.3"/><circle cx="10.5" cy="7.5" r="3" fill="none" stroke="#a8a8a8" stroke-width="1.2"/><line x1="3" y1="14" x2="18" y2="1" stroke="#a8a8a8" stroke-width="1.3"/></svg>
<svg class="a" style="left:77px;top:351px" width="21" height="15"><path d="M0.5,7.5 Q10.5,-3 20.5,7.5 Q10.5,18 0.5,7.5Z" fill="#8d8d8d"/><circle cx="10.5" cy="7.5" r="3.4" fill="#c9c9c9"/><circle cx="10.5" cy="7.5" r="1.8" fill="#8d8d8d"/></svg>
<svg class="a" style="left:77px;top:381px" width="21" height="15"><path d="M1,7.5 Q10.5,-2 20,7.5 Q10.5,17 1,7.5Z" fill="none" stroke="#a8a8a8" stroke-width="1.3"/><circle cx="10.5" cy="7.5" r="3" fill="none" stroke="#a8a8a8" stroke-width="1.2"/><line x1="3" y1="14" x2="18" y2="1" stroke="#a8a8a8" stroke-width="1.3"/></svg>
<svg class="a" style="left:108px;top:320px" width="22" height="80"><g fill="#8b8b8b"><path d="M0,2 L8,2 L8,4 L21,4 L21,17 L0,17Z"/><path d="M0,32 L8,32 L8,34 L21,34 L21,47 L0,47Z"/><path d="M0,62 L8,62 L8,64 L21,64 L21,77 L0,77Z"/></g></svg>
<div class="t" style="left:146px;top:322px;font-size:13.75px;color:#333a44">Origin</div>
<div class="t" style="left:146px;top:352px;font-size:13.75px;color:#333a44">Bodies</div>
<div class="t" style="left:146px;top:382px;font-size:13.75px;color:#333a44">Sketches</div>
<svg class="a" style="left:103px;top:334px" width="100" height="36"><g fill="none" stroke="#5a7cb0" stroke-width="1.5" stroke-dasharray="3 2.2"><path d="M1,5 Q4,0 7,3 T13,3 T19,3 T25,3 T31,3 T37,3 T43,3 T49,3 T55,3 T61,3 T67,3 T73,3 T79,3 T85,3 T89,2"/><path d="M1,35 Q4,30 7,33 T13,33 T19,33 T25,33 T31,33 T37,33 T43,33 T49,33 T55,33 T61,33 T67,33 T73,33 T79,33 T85,33 T91,33 T96,32"/></g></svg>

<!-- comments -->
<div class="a" style="left:6px;top:930px;width:374px;height:31px;background:#f1f1f1;border:1px solid #cacaca;border-bottom:2px solid #c2c2c2"></div>
<div class="t" style="left:37px;top:938px;font-size:14px;color:#5a5a5a">COMMENTS</div>
<svg class="a" style="left:354px;top:939px" width="12" height="12"><circle cx="6" cy="6" r="5.5" fill="#2a2a2a"/><rect x="2.5" y="5" width="7" height="2" fill="#fff"/><rect x="5" y="2.5" width="2" height="7" fill="#fff"/></svg>
<div class="a" style="left:376px;top:938px;width:2px;height:14px;background:#555"></div>

<!-- dialog -->
<div class="a" style="left:1121px;top:340px;width:375px;height:339px;background:#f0f0f0;border:1px solid #c6c6c6"></div>
<div class="a" style="left:1122px;top:368px;width:373px;height:3px;background:#c9c9c9"></div>
<div class="a" style="left:1122px;top:634px;width:373px;height:1px;background:#cfcfcf"></div>
<div class="a" style="left:1123px;top:348px;width:2px;height:13px;border-left:1px solid #666;border-right:1px solid #999"></div>
<svg class="a" style="left:1135px;top:348px" width="13" height="13"><circle cx="6.5" cy="6.5" r="5.8" fill="#2a2a2a"/><rect x="3" y="5.5" width="7" height="2" fill="#fff"/></svg>
<div class="t" style="left:1152px;top:347px;font-size:14px;color:#585858">CIRCULAR PATTERN</div>
<svg class="a" style="left:1476px;top:350px" width="14" height="9"><path d="M0,0 L6,4.5 L0,9Z M7,0 L13,4.5 L7,9Z" fill="#2e2e2e"/></svg>

<div class="t" style="left:1137px;top:381px;font-size:14px;color:#333">Type</div>
<div class="t" style="left:1137px;top:419px;font-size:14px;color:#333">Object Type</div>
<div class="t" style="left:1137px;top:457px;font-size:14px;color:#333">Objects</div>
<div class="t" style="left:1137px;top:494px;font-size:14px;color:#333">Axis</div>
<div class="t" style="left:1137px;top:532px;font-size:14px;color:#333">Distribution</div>
<div class="t" style="left:1137px;top:569px;font-size:14px;color:#333">Suppression</div>
<div class="t" style="left:1137px;top:607px;font-size:14px;color:#333">Quantity</div>

<svg class="a" style="left:1233px;top:378px" width="22" height="22"><rect x="1.5" y="2.5" width="4" height="4" fill="#fff" stroke="#555" stroke-width="1"/><rect x="14" y="2" width="5" height="5" fill="#3a8fd8"/><rect x="1" y="14" width="5" height="5" fill="#3a8fd8"/><rect x="14" y="14" width="5" height="5" fill="#3a8fd8"/><path d="M7,4.5 L13,4.5 M3.5,8 L3.5,13 M7,16.5 L13,16.5" stroke="#555" stroke-width="1"/></svg>
<div class="a" style="left:1264px;top:372px;width:27px;height:34px;background:#0696d7"></div>
<svg class="a" style="left:1265px;top:377px" width="25" height="25"><g fill="#9ad0ee"><circle cx="12.5" cy="4" r="2.8"/><circle cx="5" cy="9" r="2.8"/><circle cx="20" cy="9" r="2.8"/><circle cx="5.5" cy="17" r="2.8"/><circle cx="19.5" cy="17" r="2.8"/><circle cx="12.5" cy="21.5" r="2.8"/></g><circle cx="5" cy="9" r="2.8" fill="#c8d8e0"/></svg>
<svg class="a" style="left:1300px;top:379px" width="25" height="18"><path d="M1,12 Q10,18 23,9" fill="none" stroke="#444" stroke-width="1.2"/><circle cx="4" cy="9" r="2.2" fill="#fff" stroke="#444" stroke-width="1"/><circle cx="12" cy="8" r="2.6" fill="#3a8fd8"/><circle cx="20" cy="4" r="2.6" fill="#3a8fd8"/></svg>

<div class="a" style="left:1230px;top:410px;width:225px;height:33px;background:#fff;border:1px solid #c8c8c8"></div>
<div class="a" style="left:1238px;top:419px;width:14px;height:15px;border:1px solid #666;background:#fff"></div>
<div class="t" style="left:1260px;top:419px;font-size:14px;color:#333">Faces</div>
<svg class="a" style="left:1440px;top:423px" width="9" height="6"><path d="M0,0 L8,0 L4,5Z" fill="#333"/></svg>

<div class="a" style="left:1230px;top:447px;width:97px;height:33px;background:#fff;border:1px solid #c8c8c8"></div>
<svg class="a" style="left:1238px;top:453px" width="14" height="21"><path d="M1.5,1.5 L1.5,15 L5,12 L8,19 L10.5,18 L7.5,11 L12.5,11Z" fill="#fff" stroke="#444" stroke-width="1.1" stroke-linejoin="round"/></svg>
<div class="t" style="left:1257px;top:457px;font-size:14px;color:#333">8 selected</div>
<svg class="a" style="left:1341px;top:458px" width="12" height="12"><path d="M1.5,1.5 L10.5,10.5 M10.5,1.5 L1.5,10.5" stroke="#444" stroke-width="2.2"/></svg>

<div class="a" style="left:1230px;top:485px;width:97px;height:33px;background:#0696d7"></div>
<svg class="a" style="left:1238px;top:490px" width="14" height="21"><path d="M1.5,1.5 L1.5,15 L5,12 L8,19 L10.5,18 L7.5,11 L12.5,11Z" fill="#fff" stroke="#444" stroke-width="1.1" stroke-linejoin="round"/></svg>
<div class="t" style="left:1258px;top:494px;font-size:14px;color:#fff">1 selected</div>
<svg class="a" style="left:1340px;top:495px" width="12" height="12"><path d="M1.5,1.5 L10.5,10.5 M10.5,1.5 L1.5,10.5" stroke="#444" stroke-width="2.2"/></svg>

<div class="a" style="left:1230px;top:522px;width:225px;height:34px;background:#fff;border:1px solid #c8c8c8"></div>
<svg class="a" style="left:1236px;top:530px" width="18" height="18"><path d="M4,3.5 A7.2,7.2 0 1 0 9,1.8" fill="none" stroke="#333" stroke-width="1.3"/><path d="M2,1 L6.5,2.5 L3.5,6Z" fill="#333"/><circle cx="9" cy="9" r="1.2" fill="#333"/></svg>
<div class="t" style="left:1260px;top:532px;font-size:14px;color:#333">Full</div>
<svg class="a" style="left:1440px;top:536px" width="9" height="6"><path d="M0,0 L8,0 L4,5Z" fill="#333"/></svg>

<div class="a" style="left:1237px;top:568px;width:17px;height:17px;border:1px solid #4a4a4a;border-radius:3px;background:linear-gradient(#e9e9e9,#cfcfcf)"></div>

<div class="a" style="left:1231px;top:598px;width:224px;height:32px;background:#fff;border:1px solid #c8c8c8"></div>
<div class="a" style="left:1437px;top:599px;width:17px;height:30px;background:#f0f0f0;border-left:1px solid #dcdcdc"></div>
<div class="a" style="left:1438px;top:613px;width:16px;height:1px;background:#d6d6d6"></div>
<svg class="a" style="left:1441px;top:603px" width="9" height="22"><path d="M1.5,4.5 L7.5,4.5 L4.5,1Z M1.5,16 L7.5,16 L4.5,19.5Z" fill="#333"/></svg>
<div class="t" style="left:1236px;top:607px;font-size:13px;color:#333">3</div>

<svg class="a" style="left:1132px;top:650px" width="15" height="15"><circle cx="7.5" cy="7.5" r="7" fill="#111"/><rect x="6.3" y="6" width="2.6" height="6" fill="#fff"/><circle cx="7.6" cy="3.8" r="1.4" fill="#fff"/></svg>
<div class="a" style="left:1319px;top:645px;width:74px;height:24px;background:#e5e5e5;border:1px solid #bebebe"></div>
<div class="t" style="left:1345px;top:649px;font-size:15px;color:#555">OK</div>
<div class="a" style="left:1406px;top:645px;width:75px;height:24px;background:#e5e5e5;border:1px solid #bebebe"></div>
<div class="t" style="left:1420px;top:649px;font-size:15px;color:#555">Cancel</div>

<!-- model input box -->
<div class="a" style="left:696px;top:619px;width:105px;height:27px;background:#f0f0f0;border:1px solid #d4d4d4"></div>
<div class="a" style="left:699px;top:622px;width:8px;height:21px;background:repeating-linear-gradient(135deg,#e0e0e0 0 2px,#bdbdbd 2px 3px)"></div>
<div class="a" style="left:709px;top:620px;width:1px;height:25px;background:#c8c8c8"></div>
<div class="a" style="left:713px;top:620px;width:72px;height:25px;background:#fff;border-left:1px solid #c8c8c8"></div>
<div class="a" style="left:716px;top:624px;width:9px;height:17px;background:#0a64d6"></div>
<div class="a" style="left:725px;top:624px;width:1px;height:17px;background:#e07020"></div>
<div class="t" style="left:716px;top:625px;font-size:15px;color:#fff">3</div>
<svg class="a" style="left:786px;top:621px" width="13" height="23"><path d="M3.5,8 L9.5,8 L6.5,4Z M3.5,15 L9.5,15 L6.5,19Z" fill="#222"/><line x1="0" y1="11.5" x2="13" y2="11.5" stroke="#d0d0d0"/></svg>
<div class="a" style="left:808px;top:619px;width:45px;height:27px;background:#f0f0f0;border:1px solid #d8d8d8"></div>
<svg class="a" style="left:816px;top:622px" width="34" height="21"><path d="M5,5 A8,8 0 1 0 10,2.5" fill="none" stroke="#222" stroke-width="1.3"/><path d="M3,1.5 L8,3 L4.5,7Z" fill="#222"/><circle cx="10.5" cy="10.5" r="1.3" fill="#222"/><path d="M23,8 L29,8 L26,12Z" fill="#222"/></svg>

<!-- viewcube -->
<svg class="a" style="left:1380px;top:195px" width="121" height="110">
 <defs><radialGradient id="vcs" cx="0.5" cy="0.5" r="0.5"><stop offset="0" stop-color="#000" stop-opacity="0.22"/><stop offset="1" stop-color="#000" stop-opacity="0"/></radialGradient></defs>
 <ellipse cx="55" cy="87" rx="38" ry="9" fill="url(#vcs)"/>
 <path d="M25,34 L45,22 L88,27 L73,39Z" fill="#f0f0f0" stroke="#9a9a9a" stroke-width="0.6" stroke-dasharray="3 2"/>
 <path d="M73,39 L88,27 L86,68 L72,89Z" fill="#dcdcdc" stroke="#9a9a9a" stroke-width="0.6" stroke-dasharray="3 2"/>
 <path d="M25,34 L73,39 L72,89 L26,80Z" fill="#e9e9e9" stroke="#a0a0a0" stroke-width="0.6" stroke-dasharray="3 2"/>
 <text x="31" y="68" font-family="Liberation Sans" font-size="11" font-weight="bold" fill="#8a8a8a" transform="rotate(5 48 62)">FRONT</text>
 <line x1="22.5" y1="26" x2="25.5" y2="80" stroke="#5b5bff" stroke-width="2"/>
 <line x1="25.5" y1="80" x2="80" y2="92" stroke="#ff8a8a" stroke-width="2.2"/>
 <text x="17" y="23" font-family="Liberation Sans" font-size="13" font-weight="bold" fill="#6f6fff">Z</text>
 <text x="83" y="99" font-family="Liberation Sans" font-size="13" fill="#ff8a8a">X</text>
</svg>

<!-- nav bar -->
<div class="a" style="left:602px;top:931px;width:296px;height:30px;background:#ececec"></div>
<svg class="a" style="left:590px;top:920px" width="320" height="50">
 <g fill="none" stroke="#333" stroke-width="1.3">
  <path d="M20,24 Q17,28 26,29.5 Q36,30 37,26 Q37,23 31,22"/>
  <path d="M26,18 L26,35.5 M28.5,18 L28.5,35.5"/>
 </g>
 <path d="M27.3,15.5 L31,20 L23.5,20Z" fill="#fff" stroke="#333" stroke-width="1"/>
 <path d="M19,27.5 L22,25 L22,30Z" fill="#333"/>
 <path d="M42,24 L48.5,24 L45.25,28Z" fill="#333"/>
 <g fill="#f4f4f4" stroke="#444" stroke-width="1.2"><rect x="57" y="21" width="19" height="14.5"/></g>
 <rect x="61" y="25.5" width="11" height="5" fill="#a8b4c4" stroke="#555" stroke-width="0.8"/>
 <path d="M60,21 L60,18 L63,20 L66,17 L70,20 L73,17 L73,21" fill="none" stroke="#444" stroke-width="1.1"/>
 <path d="M99,35.5 C94,33 91,29 90,25 L92,24 L95,27 L95,17 L97.5,17 L97.5,24 L97.5,15.5 L100,15.5 L100,24 L100,16 L102.5,16 L102.5,24 L102.5,18 L105,18 L105,27 C105,31 103,34 101,35.5Z" fill="#fff" stroke="#333" stroke-width="1.1"/>
 <circle cx="124.5" cy="25.5" r="5.5" fill="#dfe9f0" stroke="#333" stroke-width="1.3"/>
 <path d="M128.5,29.5 L133,34" stroke="#333" stroke-width="2.6"/>
 <path d="M134,16 L134,22 M131,19 L137,19 M131,24 L137,24" stroke="#333" stroke-width="1.1"/>
 <circle cx="162" cy="25.5" r="6.8" fill="#f2f2f2" stroke="#333" stroke-width="1.4"/>
 <rect x="158.5" y="22" width="7" height="7" fill="none" stroke="#333" stroke-width="1.1"/>
 <path d="M167,30.5 L172,35.5" stroke="#333" stroke-width="2.6"/>
 <path d="M181,24 L187.5,24 L184.25,28Z" fill="#333"/>
 <rect x="196.5" y="16.5" width="19" height="14.5" fill="#2c4a7a"/>
 <rect x="198.5" y="18.5" width="15" height="10.5" fill="#9cb8dc"/>
 <path d="M202,35 L210,35 L208,31 L204,31Z" fill="#fff" stroke="#333" stroke-width="1"/>
 <path d="M218.5,24 L225,24 L221.75,28Z" fill="#333"/>
 <rect x="234.5" y="16.5" width="19" height="19" fill="#e0e0e0" stroke="#555" stroke-width="1"/>
 <path d="M238.5,16.5 L238.5,35.5 M242.5,16.5 L242.5,35.5 M246.5,16.5 L246.5,35.5 M250.5,16.5 L250.5,35.5 M234.5,20.5 L253.5,20.5 M234.5,24.5 L253.5,24.5 M234.5,28.5 L253.5,28.5 M234.5,32.5 L253.5,32.5" stroke="#777" stroke-width="0.9"/>
 <path d="M257,24 L263.5,24 L260.25,28Z" fill="#333"/>
 <rect x="273" y="17" width="19" height="16.5" fill="#2f4f86"/>
 <g fill="#9ab4d8"><rect x="275" y="19" width="6.5" height="5.5"/><rect x="283.5" y="19" width="6.5" height="5.5"/><rect x="275" y="26.5" width="6.5" height="5"/><rect x="283.5" y="26.5" width="6.5" height="5"/></g>
 <path d="M296.5,24 L303,24 L299.75,28Z" fill="#333"/>
</svg>
<div class="t" style="left:1353px;top:939px;font-size:13.75px;font-weight:bold;color:#222">Multiple selections</div>

<!-- bottom bar -->
<div class="a" style="left:1px;top:967px;width:1500px;height:62px;background:#f2f2f2;border-top:1px solid #cdcdcd"></div>
<svg class="a" style="left:0;top:968px" width="300" height="61">
 <g fill="#474747">
  <rect x="15" y="20" width="2.5" height="19"/><path d="M30,20 L18,29.5 L30,39Z"/>
  <path d="M57,21 L45,29.5 L57,38Z"/><rect x="58.5" y="25" width="2.5" height="9"/>
  <path d="M77,19 L92,29.5 L77,40Z"/>
  <rect x="107" y="25" width="2.5" height="9"/><path d="M111,21 L123,29.5 L111,38Z"/>
  <path d="M139,20 L151,29.5 L139,39Z"/><rect x="152.5" y="20" width="2.5" height="19"/>
 </g>
 <rect x="181" y="9" width="86" height="6" fill="#5bd3de"/>
 <g stroke="#333" stroke-width="1.6"><path d="M216,14 L219,10 M221,14 L224,10 M226,14 L229,10 M246,14 L249,10 M251,14 L254,10 M256,14 L259,10"/></g>
 <g fill="none" stroke="#555" stroke-width="1" stroke-dasharray="2 1.5"><rect x="186" y="22" width="16" height="16"/></g>
 <g fill="#2a7fd4"><rect x="184.5" y="20.5" width="3" height="3"/><rect x="200.5" y="20.5" width="3" height="3"/><rect x="184.5" y="36.5" width="3" height="3"/></g>
 <path d="M195,37 L204,27 L206,29 L197,39Z" fill="#f0a030"/><path d="M204,27 L206,25 L208,27 L206,29Z" fill="#e04040"/>
 <path d="M214,24 L218,20 L230,20 L230,34 L226,38 L214,38Z" fill="#5a9de0" stroke="#3a6fb0" stroke-width="0.8"/><path d="M214,38 L226,38 L230,34 L230,36 L227,40 L214,40Z" fill="#c8c8c8"/><path d="M233,37 L233,22 M231,25 L233,21 L235,25" stroke="#333" stroke-width="1.2" fill="none"/>
 <path d="M244,38 L244,24 Q244,20 250,20 L256,20 Q264,22 265,30 L265,38Z" fill="#dcdcdc" stroke="#555" stroke-width="1"/><path d="M256,20 Q264,22 265,30 L261,31 Q260,25 254,24Z" fill="#4a90d9"/>
 <g stroke="#c6c6c6" stroke-width="2" fill="none"><path d="M195,44 L195,50 L255,50 L255,44 M225,44 L225,50"/></g>
 <path d="M262,11 L276,11 L273,18 L265,18Z" fill="#555"/><rect x="267" y="17" width="3.5" height="33" fill="#555"/>
</svg>
<svg class="a" style="left:1464px;top:987px" width="22" height="22"><g fill="#8b8b8b"><circle cx="11" cy="11" r="7"/><g stroke="#8b8b8b" stroke-width="3.6"><line x1="11" y1="1" x2="11" y2="21"/><line x1="1" y1="11" x2="21" y2="11"/><line x1="4" y1="4" x2="18" y2="18"/><line x1="18" y1="4" x2="4" y2="18"/></g></g><circle cx="11" cy="11" r="3.4" fill="#f2f2f2"/></svg>

</body></html>
